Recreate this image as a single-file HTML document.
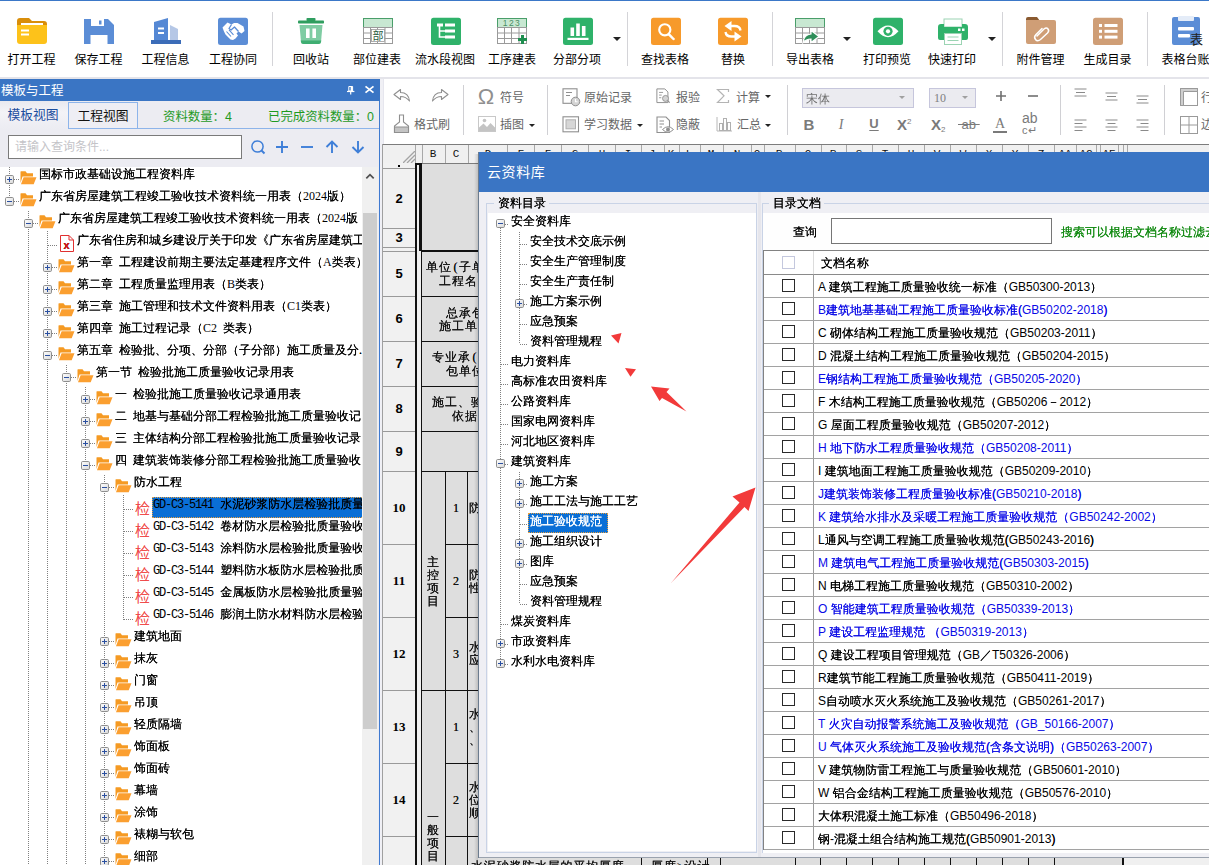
<!DOCTYPE html>
<html lang="zh-CN"><head><meta charset="utf-8"><title>云资料库</title>
<style>
*{box-sizing:border-box;margin:0;padding:0}
html,body{width:1209px;height:865px;overflow:hidden;background:#f0f0f5}
body{position:relative;font-family:"Liberation Sans","Noto Sans CJK SC",sans-serif;font-size:12px;color:#000}
.abs{position:absolute}
.yh{font-family:"Liberation Sans","Noto Sans CJK SC",sans-serif}
.st{font-family:"Liberation Serif","WenQuanYi Zen Hei",sans-serif}
#topline{left:0;top:0;width:1209px;height:1px;background:#3b78c8}
#tb1{left:0;top:1px;width:1209px;height:76px;background:#fff}
#tb1line{left:0;top:77px;width:1209px;height:2px;background:#e4e4ea}
.tbi{position:absolute;top:53px;height:14px;line-height:14px;font-size:12px;white-space:nowrap;text-align:center;color:#000;transform:translateX(-50%)}
.tbic{position:absolute}
.vsep{position:absolute;width:1px;background:#d4d4d8}
.darr{position:absolute;width:0;height:0;border-left:3px solid transparent;border-right:3px solid transparent;border-top:3px solid #222}
/* left panel */
#lp{left:0;top:79px;width:380px;height:786px;background:#ececf2}
#lptitle{left:0;top:0;width:380px;height:22px;background:#3a75c4;color:#fff;font-size:12.5px;line-height:25px;padding-left:1px}
#lpborder{left:378.5px;top:22px;width:1.5px;height:764px;background:#3f7ad0}

.fo{display:block}
.tr{word-spacing:3px;white-space:nowrap;font-size:12px;line-height:22px;height:22px;color:#000}
.tr .code{font-family:"Liberation Mono",monospace;font-size:12px;letter-spacing:-1.2px;margin-right:1.2px}

.vdot{width:1px;background-image:linear-gradient(#808080 50%,transparent 50%);background-size:1px 2px}
.hdot{height:1px;background-image:linear-gradient(90deg,#808080 50%,transparent 50%);background-size:2px 1px}

.t2{font-size:12px;line-height:16px;height:16px;white-space:nowrap}
.colh{width:20px;text-align:center;font-size:11px;line-height:16px;font-family:"Liberation Mono",monospace;color:#111}
.cell{font-size:12px;line-height:18px;height:18px;letter-spacing:1px;white-space:nowrap;color:#111}

.dt{font-family:"Liberation Sans","WenQuanYi Zen Hei",sans-serif}
.dt .l{text-shadow:none}

.cell .p{display:inline-block;width:7px;letter-spacing:0;text-align:center}

.st,.dt,.tr,.cell{text-shadow:0 0 0}
.dt .l,.tr .code,.tr .l{text-shadow:none}
</style></head>
<body>
<div class="abs" id="tb1"></div><div class="abs" id="topline"></div><div class="abs" id="tb1line"></div>
<div class="tbic" style="left:15.5px;top:15px"><svg width="32" height="32" viewBox="0 0 32 32">
<path d="M1 6 Q1 3 4 3 L13 3 L16 6 L28 6 Q31 6 31 9 L31 12 L1 12 Z" fill="#d98e0a"/>
<rect x="5" y="8" width="22" height="6" fill="#fff"/>
<path d="M1 10 L31 10 L31 26 Q31 29 28 29 L4 29 Q1 29 1 26 Z" fill="#fdc21a"/>
<rect x="5" y="14.5" width="8" height="2" fill="#fff"/><rect x="5" y="18.5" width="8" height="2" fill="#fff"/>
</svg></div>
<div class="tbi" style="left:31.5px">打开工程</div>
<div class="tbic" style="left:82.5px;top:15px"><svg width="32" height="32" viewBox="0 0 32 32">
<path d="M1 4 L25 4 L31 10 L31 29 L1 29 Z" fill="#5b8dd6"/>
<rect x="8" y="4" width="13" height="7" fill="#fff"/><rect x="16" y="5.5" width="2.5" height="4" fill="#5b8dd6"/>
<rect x="7.5" y="20" width="17" height="9" fill="#fff"/>
</svg></div>
<div class="tbi" style="left:98.5px">保存工程</div>
<div class="tbic" style="left:149.5px;top:15px"><svg width="32" height="32" viewBox="0 0 32 32">
<path d="M4 7 L18 3 L18 25 L4 25 Z" fill="#5588d4"/>
<path d="M20 10 L28 14 L28 25 L20 25 Z" fill="#b5c7e6"/>
<rect x="1" y="25" width="30" height="4" fill="#3b6cb8"/>
<rect x="8" y="12.5" width="6" height="2" fill="#fff"/><rect x="8" y="17" width="6" height="2" fill="#fff"/>
</svg></div>
<div class="tbi" style="left:165.5px">工程信息</div>
<div class="tbic" style="left:217px;top:15px"><svg width="32" height="32" viewBox="0 0 32 32">
<rect x="1" y="2.7" width="30" height="27.3" rx="2.5" fill="#5b8dd6"/>
<path d="M5.5 12.5 L10.5 7.5 L14.5 9.5 L17 8 L20.5 8 L26.5 11.5 L27.5 16 L24.5 18.5 L21.5 16.5 L19.5 18.5 L21 20.5 L18.5 23.5 L16 25 L13.5 24.5 L8.5 19.5 L7 16.5 Z" fill="#fff"/>
<path d="M14.5 9.5 L12 13.5 L14 15 L17.5 12 L21.5 16.5" stroke="#5b8dd6" stroke-width="1.3" fill="none" stroke-linejoin="round"/>
<path d="M9.5 16.5 L14 21.5 M12 14.8 L16.5 19.8" stroke="#5b8dd6" stroke-width="1.1" fill="none"/>
</svg></div>
<div class="tbi" style="left:233px">工程协同</div>
<div class="tbic" style="left:295px;top:15px"><svg width="32" height="32" viewBox="0 0 32 32">
<rect x="11.5" y="3" width="9" height="3" rx="0.8" fill="#2f9e5f"/>
<rect x="3" y="5.5" width="26" height="3" rx="0.8" fill="#2f9e5f"/>
<path d="M4.5 10 L27.5 10 L26 27 Q25.8 29 23.5 29 L8.5 29 Q6.2 29 6 27 Z" fill="#7fcca3"/>
<path d="M5.7 25.5 L26.3 25.5 L26 27 Q25.8 29 23.5 29 L8.5 29 Q6.2 29 6 27 Z" fill="#3fae72"/>
<rect x="11" y="13.5" width="3.6" height="9.5" fill="#fff"/><rect x="17.4" y="13.5" width="3.6" height="9.5" fill="#fff"/>
</svg></div>
<div class="tbi" style="left:311px">回收站</div>
<div class="tbic" style="left:362.3px;top:15px"><svg width="32" height="32" viewBox="0 0 32 32">
<rect x="1.5" y="3.5" width="29" height="9" fill="#c8e8d2" stroke="#4a9e6a" stroke-width="1"/>
<rect x="1.5" y="12.5" width="29" height="16" fill="#fff" stroke="#9a9a9a" stroke-width="1"/>
<path d="M1.5 18 H30.5 M1.5 23.5 H30.5 M8.5 12.5 V28.5 M15.5 12.5 V28.5 M23 12.5 V28.5" stroke="#9a9a9a" stroke-width="1" fill="none"/>
<rect x="9.5" y="14.5" width="13" height="12" fill="#fff" stroke="#9a9a9a" stroke-width="0.8"/><text x="16" y="25" font-size="11" text-anchor="middle" fill="#2a5a3c" font-family="Liberation Sans,Noto Sans CJK SC,sans-serif">部</text></svg></div>
<div class="tbi" style="left:377px">部位建表</div>
<div class="tbic" style="left:430px;top:15px"><svg width="32" height="32" viewBox="0 0 32 32">
<rect x="1" y="2.7" width="30" height="27.3" rx="2.5" fill="#2fb26a"/>
<rect x="7" y="8.5" width="6" height="3" fill="#fff"/>
<rect x="15" y="8.5" width="10" height="3" fill="#fff"/><rect x="15" y="14.5" width="10" height="3" fill="#fff"/><rect x="15" y="20.5" width="10" height="3" fill="#fff"/>
<path d="M9.5 11 V22 H15 M9.5 16 H15" stroke="#fff" stroke-width="1.6" fill="none"/>
</svg></div>
<div class="tbi" style="left:445px">流水段视图</div>
<div class="tbic" style="left:496px;top:15px"><svg width="32" height="32" viewBox="0 0 32 32">
<rect x="1.5" y="3.5" width="29" height="9" fill="#c8e8d2" stroke="#4a9e6a" stroke-width="1"/>
<rect x="1.5" y="12.5" width="29" height="16" fill="#fff" stroke="#9a9a9a" stroke-width="1"/>
<path d="M1.5 18 H30.5 M1.5 23.5 H30.5 M8.5 12.5 V28.5 M15.5 12.5 V28.5 M23 12.5 V28.5" stroke="#9a9a9a" stroke-width="1" fill="none"/>
<text x="16" y="11" font-size="8.5" text-anchor="middle" fill="#4a8e64" letter-spacing="1.5" font-family="Liberation Sans,sans-serif">123</text><path d="M22 24.5 H31 M26.5 20 V29" stroke="#1f8e4f" stroke-width="3" fill="none"/></svg></div>
<div class="tbi" style="left:512px">工序建表</div>
<div class="tbic" style="left:562.3px;top:15px"><svg width="32" height="32" viewBox="0 0 32 32">
<rect x="1" y="2.7" width="30" height="27.3" rx="2.5" fill="#2fb26a"/>
<rect x="8.5" y="12.5" width="3.6" height="8.5" fill="#fff"/><rect x="14.2" y="8.5" width="3.6" height="12.5" fill="#fff"/><rect x="19.9" y="11" width="3.6" height="10" fill="#fff"/>
<rect x="5.5" y="22.8" width="21" height="2.2" fill="#fff"/>
</svg></div>
<div class="tbi" style="left:577px">分部分项</div>
<div class="tbic" style="left:649.8px;top:15px"><svg width="32" height="32" viewBox="0 0 32 32">
<rect x="1" y="2.7" width="30" height="27.3" rx="2.5" fill="#f79a2b"/>
<circle cx="14.8" cy="14.8" r="5.6" stroke="#fff" stroke-width="2.1" fill="none"/><path d="M19 19.3 L23.5 24" stroke="#fff" stroke-width="2.5" stroke-linecap="round"/>
</svg></div>
<div class="tbi" style="left:665px">查找表格</div>
<div class="tbic" style="left:717px;top:15px"><svg width="32" height="32" viewBox="0 0 32 32">
<rect x="1" y="2.7" width="30" height="27.3" rx="2.5" fill="#f79a2b"/>
<path d="M23.5 15.5 Q23 11 17.5 11 H13" stroke="#fff" stroke-width="2.3" fill="none"/>
<path d="M7.5 11 L14.5 6 V16 Z" fill="#fff"/>
<path d="M8.5 17 Q9 21.5 14.5 21.5 H19" stroke="#fff" stroke-width="2.3" fill="none"/>
<path d="M24.5 21.5 L17.5 16.5 V26.5 Z" fill="#fff"/>
</svg></div>
<div class="tbi" style="left:733px">替换</div>
<div class="tbic" style="left:794px;top:15px"><svg width="32" height="32" viewBox="0 0 32 32">
<rect x="1.5" y="3.5" width="29" height="9" fill="#c8e8d2" stroke="#4a9e6a" stroke-width="1"/>
<rect x="1.5" y="12.5" width="29" height="16" fill="#fff" stroke="#9a9a9a" stroke-width="1"/>
<path d="M1.5 18 H30.5 M1.5 23.5 H30.5 M8.5 12.5 V28.5 M15.5 12.5 V28.5 M23 12.5 V28.5" stroke="#9a9a9a" stroke-width="1" fill="none"/>
<path d="M9 27.5 Q10 19.5 17 19 V15.5 L25 21.5 L17 27.5 V24 Q12 24 9 27.5 Z" fill="#2f8e5a" stroke="#fff" stroke-width="1.2"/></svg></div>
<div class="tbi" style="left:810px">导出表格</div>
<div class="tbic" style="left:871.5px;top:15px"><svg width="32" height="32" viewBox="0 0 32 32">
<rect x="1" y="2.7" width="30" height="27.3" rx="2.5" fill="#2fb26a"/>
<path d="M5.5 16.3 Q16 4.5 26.5 16.3 Q16 28 5.5 16.3 Z" fill="#fff"/><circle cx="16" cy="16.3" r="4.6" fill="#2fb26a"/><circle cx="16" cy="16.3" r="2.1" fill="#fff"/>
</svg></div>
<div class="tbi" style="left:887px">打印预览</div>
<div class="tbic" style="left:937px;top:15px"><svg width="32" height="32" viewBox="0 0 32 32">
<rect x="7" y="4" width="18" height="8" fill="#fff" stroke="#9bd4b3" stroke-width="1"/>
<path d="M4 9 H7 V12 H25 V9 H28 Q31 9 31 12 V23 Q31 25 29 25 H3 Q1 25 1 23 V12 Q1 9 4 9 Z" fill="#2fb26a"/>
<rect x="21" y="13.5" width="2.5" height="2.5" fill="#fff"/><rect x="25" y="13.5" width="2.5" height="2.5" fill="#fff"/>
<rect x="7.5" y="18.5" width="17" height="11" fill="#fff" stroke="#9bd4b3" stroke-width="1"/>
<path d="M10.5 22 H21.5 M10.5 25.5 H21.5" stroke="#9bd4b3" stroke-width="1"/>
</svg></div>
<div class="tbi" style="left:952px">快速打印</div>
<div class="tbic" style="left:1024.5px;top:15px"><svg width="32" height="32" viewBox="0 0 32 32">
<path d="M1 4 Q1 2 3 2 L12 2 L15 6 L1 6 Z" fill="#8a5a30"/>
<path d="M1 5 H29 Q31 5 31 7 V27 Q31 29 29 29 H3 Q1 29 1 27 Z" fill="#cf9e76"/>
<path d="M12 21 L19 14 Q21.5 12 23 14 Q24.5 16 22.5 18 L15.5 24.5 Q12.5 27 10.5 24.5 Q8.5 22 11 19.5 L17 13.5" stroke="#fff" stroke-width="1.5" fill="none" stroke-linecap="round"/>
</svg></div>
<div class="tbi" style="left:1040.5px">附件管理</div>
<div class="tbic" style="left:1091.5px;top:15px"><svg width="32" height="32" viewBox="0 0 32 32">
<rect x="1" y="2.7" width="30" height="27.3" rx="2.5" fill="#cf9e76"/>
<rect x="7" y="9" width="3" height="3" fill="#fff"/><rect x="12.5" y="9" width="13" height="3" fill="#fff"/>
<rect x="7" y="14.8" width="3" height="3" fill="#fff"/><rect x="12.5" y="14.8" width="13" height="3" fill="#fff"/>
<rect x="7" y="20.6" width="3" height="3" fill="#fff"/><rect x="12.5" y="20.6" width="13" height="3" fill="#fff"/>
</svg></div>
<div class="tbi" style="left:1107.5px">生成目录</div>
<div class="tbic" style="left:1169.5px;top:15px"><svg width="36" height="32" viewBox="0 0 36 32">
<path d="M2 4 Q2 2 4 2 H28 Q30 2 30 4 V28 Q30 30 28 30 H4 Q2 30 2 28 Z" fill="#5b8dd6"/>
<rect x="8" y="1" width="16" height="5" rx="1" fill="#e4ecf8"/>
<rect x="8" y="12" width="16" height="3.5" rx="1" fill="#fff"/><rect x="8" y="19" width="12" height="3.5" rx="1" fill="#fff"/>
<text x="26.5" y="29" font-size="13" text-anchor="middle" fill="#222" font-family="Liberation Sans,Noto Sans CJK SC,sans-serif">表</text>
</svg></div>
<div class="tbi" style="left:1185.5px">表格台账</div>
<div class="vsep" style="left:272px;top:12px;height:54px"></div>
<div class="vsep" style="left:627px;top:12px;height:54px"></div>
<div class="vsep" style="left:772px;top:12px;height:54px"></div>
<div class="vsep" style="left:1002px;top:12px;height:54px"></div>
<div class="vsep" style="left:1147px;top:12px;height:54px"></div>
<div class="darr" style="left:612.5px;top:37px;border-left-width:4px;border-right-width:4px;border-top-width:4px"></div>
<div class="darr" style="left:843px;top:37px;border-left-width:4px;border-right-width:4px;border-top-width:4px"></div>
<div class="darr" style="left:987.5px;top:37px;border-left-width:4px;border-right-width:4px;border-top-width:4px"></div>
<div class="abs" id="lp">
<div class="abs" id="lptitle">模板与工程</div>
<svg class="abs" style="left:345px;top:6px" width="12" height="12" viewBox="0 0 12 12"><path d="M3.8 1.5 H7.6 V6 H3.8 Z" stroke="#fff" stroke-width="1" fill="none"/><path d="M6.6 1.5 V6" stroke="#fff" stroke-width="1.9"/><path d="M2 6.5 H9.4" stroke="#fff" stroke-width="1.2"/><path d="M5.7 6.5 V9.6" stroke="#fff" stroke-width="1.2"/></svg>
<svg class="abs" style="left:364px;top:5px" width="12" height="12" viewBox="0 0 12 12"><path d="M1.5 2.3 L9.5 8.7 M9.5 2.3 L1.5 8.7" stroke="#fff" stroke-width="1.7"/></svg>
<div class="abs" style="left:0;top:22px;width:379px;height:28px;border-bottom:1px solid #8db4ea"></div>
<div class="abs" style="left:0;top:22px;width:69px;height:28px;background:linear-gradient(#e9e9ef,#f3f3f7 40%,#ececf2);color:#1c4e9e;line-height:28px;text-align:center;font-size:12.8px;padding-right:3px">模板视图</div>
<div class="abs" style="left:68px;top:23px;width:70px;height:27px;border:1px solid #8db4ea;background:#eeeef4;color:#111;line-height:25px;text-align:center;font-size:12.8px">工程视图</div>
<div class="abs" style="left:163px;top:22px;height:28px;line-height:33px;color:#1f9a1f;font-size:12.4px;white-space:nowrap">资料数量：4</div>
<div class="abs" style="left:268px;top:22px;height:28px;line-height:33px;color:#1f9a1f;font-size:12.4px;white-space:nowrap">已完成资料数量：0</div>
<div class="abs" style="left:8px;top:56px;width:234px;height:24px;border:1px solid #7a7a7a;background:#fff;color:#c4c4c8;font-size:12px;line-height:23px;padding-left:6px">请输入查询条件...</div>
<svg class="abs" style="left:250px;top:60px" width="120" height="16" viewBox="0 0 120 16"><circle cx="7.5" cy="7.5" r="5.6" stroke="#3f7fd8" stroke-width="1.5" fill="none"/><path d="M11.5 11.5 L14.5 14.5" stroke="#3f7fd8" stroke-width="1.9"/><path d="M26 8 H38 M32 2 V14" stroke="#3f7fd8" stroke-width="1.9"/><path d="M51 8 H63" stroke="#3f7fd8" stroke-width="1.9"/><path d="M82 14 V2.5 M76.5 8 L82 2.5 L87.5 8" stroke="#3f7fd8" stroke-width="1.9" fill="none"/><path d="M108 2 V13.5 M102.5 8 L108 13.5 L113.5 8" stroke="#3f7fd8" stroke-width="1.9" fill="none"/></svg>
<div class="abs st" id="tree" style="left:0;top:88px;width:362px;height:698px;background:#fff;overflow:hidden">
<div class="abs vdot" style="left:9px;top:0px;height:34px"></div>
<div class="abs vdot" style="left:28px;top:44px;height:666px"></div>
<div class="abs vdot" style="left:47px;top:64px;height:646px"></div>
<div class="abs vdot" style="left:66px;top:198px;height:512px"></div>
<div class="abs vdot" style="left:85px;top:220px;height:490px"></div>
<div class="abs vdot" style="left:104px;top:308px;height:402px"></div>
<div class="abs vdot" style="left:123px;top:328px;height:125px"></div>
<div class="abs hdot" style="left:10px;top:12px;width:10px"></div>
<svg class="abs" style="left:5px;top:8px" width="9" height="9" viewBox="0 0 9 9"><defs><linearGradient id="pg" x1="0" y1="0" x2="1" y2="1"><stop offset="0" stop-color="#fff"/><stop offset="1" stop-color="#d8d8d8"/></linearGradient></defs><rect x="0.5" y="0.5" width="8" height="8" rx="1.2" fill="url(#pg)" stroke="#8e8e8e"/><path d="M2 4.5 H7" stroke="#2a4fa0" stroke-width="1"/><path d="M4.5 2 V7" stroke="#2a4fa0" stroke-width="1"/></svg>
<div class="abs" style="left:20px;top:4px"><svg class="fo" width="17" height="14" viewBox="0 0 17 14"><path d="M0.5 0.8 Q0.5 0.3 1 0.3 H5.5 L7 2.2 H13 V5.5 H2.5 L0.5 12 Z" fill="#f59a23"/><path d="M1 13.3 L3.6 6.3 H16.5 L13.7 13.3 Z" fill="#fb9f30"/></svg></div>
<div class="abs tr" style="left:39px;top:-4px">国标市政基础设施工程资料库</div>
<div class="abs hdot" style="left:10px;top:34px;width:10px"></div>
<svg class="abs" style="left:5px;top:30px" width="9" height="9" viewBox="0 0 9 9"><defs><linearGradient id="pg" x1="0" y1="0" x2="1" y2="1"><stop offset="0" stop-color="#fff"/><stop offset="1" stop-color="#d8d8d8"/></linearGradient></defs><rect x="0.5" y="0.5" width="8" height="8" rx="1.2" fill="url(#pg)" stroke="#8e8e8e"/><path d="M2 4.5 H7" stroke="#2a4fa0" stroke-width="1"/></svg>
<div class="abs" style="left:20px;top:26px"><svg class="fo" width="17" height="14" viewBox="0 0 17 14"><path d="M0.5 0.8 Q0.5 0.3 1 0.3 H5.5 L7 2.2 H13 V5.5 H2.5 L0.5 12 Z" fill="#f59a23"/><path d="M1 13.3 L3.6 6.3 H16.5 L13.7 13.3 Z" fill="#fb9f30"/></svg></div>
<div class="abs tr" style="left:39px;top:18px">广东省房屋建筑工程竣工验收技术资料统一用表（<span class="l">2024</span>版）</div>
<div class="abs hdot" style="left:29px;top:56px;width:10px"></div>
<svg class="abs" style="left:24px;top:52px" width="9" height="9" viewBox="0 0 9 9"><defs><linearGradient id="pg" x1="0" y1="0" x2="1" y2="1"><stop offset="0" stop-color="#fff"/><stop offset="1" stop-color="#d8d8d8"/></linearGradient></defs><rect x="0.5" y="0.5" width="8" height="8" rx="1.2" fill="url(#pg)" stroke="#8e8e8e"/><path d="M2 4.5 H7" stroke="#2a4fa0" stroke-width="1"/></svg>
<div class="abs" style="left:39px;top:48px"><svg class="fo" width="17" height="14" viewBox="0 0 17 14"><path d="M0.5 0.8 Q0.5 0.3 1 0.3 H5.5 L7 2.2 H13 V5.5 H2.5 L0.5 12 Z" fill="#f59a23"/><path d="M1 13.3 L3.6 6.3 H16.5 L13.7 13.3 Z" fill="#fb9f30"/></svg></div>
<div class="abs tr" style="left:58px;top:40px">广东省房屋建筑工程竣工验收技术资料统一用表（<span class="l">2024</span>版</div>
<div class="abs hdot" style="left:48px;top:78px;width:10px"></div>
<div class="abs" style="left:59px;top:68px"><svg class="fo" width="16" height="17" viewBox="0 0 16 17"><path d="M1.5 0.5 H10 L14.5 5 V16.5 H1.5 Z" fill="#fff" stroke="#e03030" stroke-width="1"/><path d="M10 0.5 V5 H14.5" fill="none" stroke="#e03030" stroke-width="1"/><text x="7.5" y="14" font-size="11" font-weight="bold" fill="#e01010" text-anchor="middle" font-family="Liberation Sans,sans-serif">x</text></svg></div>
<div class="abs tr" style="left:77px;top:62px">广东省住房和城乡建设厅关于印发《广东省房屋建筑工</div>
<div class="abs hdot" style="left:48px;top:100px;width:10px"></div>
<svg class="abs" style="left:43px;top:96px" width="9" height="9" viewBox="0 0 9 9"><defs><linearGradient id="pg" x1="0" y1="0" x2="1" y2="1"><stop offset="0" stop-color="#fff"/><stop offset="1" stop-color="#d8d8d8"/></linearGradient></defs><rect x="0.5" y="0.5" width="8" height="8" rx="1.2" fill="url(#pg)" stroke="#8e8e8e"/><path d="M2 4.5 H7" stroke="#2a4fa0" stroke-width="1"/><path d="M4.5 2 V7" stroke="#2a4fa0" stroke-width="1"/></svg>
<div class="abs" style="left:58px;top:92px"><svg class="fo" width="17" height="14" viewBox="0 0 17 14"><path d="M0.5 0.8 Q0.5 0.3 1 0.3 H5.5 L7 2.2 H13 V5.5 H2.5 L0.5 12 Z" fill="#f59a23"/><path d="M1 13.3 L3.6 6.3 H16.5 L13.7 13.3 Z" fill="#fb9f30"/></svg></div>
<div class="abs tr" style="left:77px;top:84px">第一章 工程建设前期主要法定基建程序文件（<span class="l">A</span>类表）</div>
<div class="abs hdot" style="left:48px;top:122px;width:10px"></div>
<svg class="abs" style="left:43px;top:118px" width="9" height="9" viewBox="0 0 9 9"><defs><linearGradient id="pg" x1="0" y1="0" x2="1" y2="1"><stop offset="0" stop-color="#fff"/><stop offset="1" stop-color="#d8d8d8"/></linearGradient></defs><rect x="0.5" y="0.5" width="8" height="8" rx="1.2" fill="url(#pg)" stroke="#8e8e8e"/><path d="M2 4.5 H7" stroke="#2a4fa0" stroke-width="1"/><path d="M4.5 2 V7" stroke="#2a4fa0" stroke-width="1"/></svg>
<div class="abs" style="left:58px;top:114px"><svg class="fo" width="17" height="14" viewBox="0 0 17 14"><path d="M0.5 0.8 Q0.5 0.3 1 0.3 H5.5 L7 2.2 H13 V5.5 H2.5 L0.5 12 Z" fill="#f59a23"/><path d="M1 13.3 L3.6 6.3 H16.5 L13.7 13.3 Z" fill="#fb9f30"/></svg></div>
<div class="abs tr" style="left:77px;top:106px">第二章 工程质量监理用表（<span class="l">B</span>类表）</div>
<div class="abs hdot" style="left:48px;top:144px;width:10px"></div>
<svg class="abs" style="left:43px;top:140px" width="9" height="9" viewBox="0 0 9 9"><defs><linearGradient id="pg" x1="0" y1="0" x2="1" y2="1"><stop offset="0" stop-color="#fff"/><stop offset="1" stop-color="#d8d8d8"/></linearGradient></defs><rect x="0.5" y="0.5" width="8" height="8" rx="1.2" fill="url(#pg)" stroke="#8e8e8e"/><path d="M2 4.5 H7" stroke="#2a4fa0" stroke-width="1"/><path d="M4.5 2 V7" stroke="#2a4fa0" stroke-width="1"/></svg>
<div class="abs" style="left:58px;top:136px"><svg class="fo" width="17" height="14" viewBox="0 0 17 14"><path d="M0.5 0.8 Q0.5 0.3 1 0.3 H5.5 L7 2.2 H13 V5.5 H2.5 L0.5 12 Z" fill="#f59a23"/><path d="M1 13.3 L3.6 6.3 H16.5 L13.7 13.3 Z" fill="#fb9f30"/></svg></div>
<div class="abs tr" style="left:77px;top:128px">第三章 施工管理和技术文件资料用表（<span class="l">C1</span>类表）</div>
<div class="abs hdot" style="left:48px;top:166px;width:10px"></div>
<svg class="abs" style="left:43px;top:162px" width="9" height="9" viewBox="0 0 9 9"><defs><linearGradient id="pg" x1="0" y1="0" x2="1" y2="1"><stop offset="0" stop-color="#fff"/><stop offset="1" stop-color="#d8d8d8"/></linearGradient></defs><rect x="0.5" y="0.5" width="8" height="8" rx="1.2" fill="url(#pg)" stroke="#8e8e8e"/><path d="M2 4.5 H7" stroke="#2a4fa0" stroke-width="1"/><path d="M4.5 2 V7" stroke="#2a4fa0" stroke-width="1"/></svg>
<div class="abs" style="left:58px;top:158px"><svg class="fo" width="17" height="14" viewBox="0 0 17 14"><path d="M0.5 0.8 Q0.5 0.3 1 0.3 H5.5 L7 2.2 H13 V5.5 H2.5 L0.5 12 Z" fill="#f59a23"/><path d="M1 13.3 L3.6 6.3 H16.5 L13.7 13.3 Z" fill="#fb9f30"/></svg></div>
<div class="abs tr" style="left:77px;top:150px">第四章 施工过程记录（<span class="l">C2</span> 类表）</div>
<div class="abs hdot" style="left:48px;top:188px;width:10px"></div>
<svg class="abs" style="left:43px;top:184px" width="9" height="9" viewBox="0 0 9 9"><defs><linearGradient id="pg" x1="0" y1="0" x2="1" y2="1"><stop offset="0" stop-color="#fff"/><stop offset="1" stop-color="#d8d8d8"/></linearGradient></defs><rect x="0.5" y="0.5" width="8" height="8" rx="1.2" fill="url(#pg)" stroke="#8e8e8e"/><path d="M2 4.5 H7" stroke="#2a4fa0" stroke-width="1"/></svg>
<div class="abs" style="left:58px;top:180px"><svg class="fo" width="17" height="14" viewBox="0 0 17 14"><path d="M0.5 0.8 Q0.5 0.3 1 0.3 H5.5 L7 2.2 H13 V5.5 H2.5 L0.5 12 Z" fill="#f59a23"/><path d="M1 13.3 L3.6 6.3 H16.5 L13.7 13.3 Z" fill="#fb9f30"/></svg></div>
<div class="abs tr" style="left:77px;top:172px">第五章 检验批、分项、分部（子分部）施工质量及分.</div>
<div class="abs hdot" style="left:67px;top:210px;width:10px"></div>
<svg class="abs" style="left:62px;top:206px" width="9" height="9" viewBox="0 0 9 9"><defs><linearGradient id="pg" x1="0" y1="0" x2="1" y2="1"><stop offset="0" stop-color="#fff"/><stop offset="1" stop-color="#d8d8d8"/></linearGradient></defs><rect x="0.5" y="0.5" width="8" height="8" rx="1.2" fill="url(#pg)" stroke="#8e8e8e"/><path d="M2 4.5 H7" stroke="#2a4fa0" stroke-width="1"/></svg>
<div class="abs" style="left:77px;top:202px"><svg class="fo" width="17" height="14" viewBox="0 0 17 14"><path d="M0.5 0.8 Q0.5 0.3 1 0.3 H5.5 L7 2.2 H13 V5.5 H2.5 L0.5 12 Z" fill="#f59a23"/><path d="M1 13.3 L3.6 6.3 H16.5 L13.7 13.3 Z" fill="#fb9f30"/></svg></div>
<div class="abs tr" style="left:96px;top:194px">第一节 检验批施工质量验收记录用表</div>
<div class="abs hdot" style="left:86px;top:232px;width:10px"></div>
<svg class="abs" style="left:81px;top:228px" width="9" height="9" viewBox="0 0 9 9"><defs><linearGradient id="pg" x1="0" y1="0" x2="1" y2="1"><stop offset="0" stop-color="#fff"/><stop offset="1" stop-color="#d8d8d8"/></linearGradient></defs><rect x="0.5" y="0.5" width="8" height="8" rx="1.2" fill="url(#pg)" stroke="#8e8e8e"/><path d="M2 4.5 H7" stroke="#2a4fa0" stroke-width="1"/><path d="M4.5 2 V7" stroke="#2a4fa0" stroke-width="1"/></svg>
<div class="abs" style="left:96px;top:224px"><svg class="fo" width="17" height="14" viewBox="0 0 17 14"><path d="M0.5 0.8 Q0.5 0.3 1 0.3 H5.5 L7 2.2 H13 V5.5 H2.5 L0.5 12 Z" fill="#f59a23"/><path d="M1 13.3 L3.6 6.3 H16.5 L13.7 13.3 Z" fill="#fb9f30"/></svg></div>
<div class="abs tr" style="left:115px;top:216px">一 检验批施工质量验收记录通用表</div>
<div class="abs hdot" style="left:86px;top:254px;width:10px"></div>
<svg class="abs" style="left:81px;top:250px" width="9" height="9" viewBox="0 0 9 9"><defs><linearGradient id="pg" x1="0" y1="0" x2="1" y2="1"><stop offset="0" stop-color="#fff"/><stop offset="1" stop-color="#d8d8d8"/></linearGradient></defs><rect x="0.5" y="0.5" width="8" height="8" rx="1.2" fill="url(#pg)" stroke="#8e8e8e"/><path d="M2 4.5 H7" stroke="#2a4fa0" stroke-width="1"/><path d="M4.5 2 V7" stroke="#2a4fa0" stroke-width="1"/></svg>
<div class="abs" style="left:96px;top:246px"><svg class="fo" width="17" height="14" viewBox="0 0 17 14"><path d="M0.5 0.8 Q0.5 0.3 1 0.3 H5.5 L7 2.2 H13 V5.5 H2.5 L0.5 12 Z" fill="#f59a23"/><path d="M1 13.3 L3.6 6.3 H16.5 L13.7 13.3 Z" fill="#fb9f30"/></svg></div>
<div class="abs tr" style="left:115px;top:238px">二 地基与基础分部工程检验批施工质量验收记</div>
<div class="abs hdot" style="left:86px;top:276px;width:10px"></div>
<svg class="abs" style="left:81px;top:272px" width="9" height="9" viewBox="0 0 9 9"><defs><linearGradient id="pg" x1="0" y1="0" x2="1" y2="1"><stop offset="0" stop-color="#fff"/><stop offset="1" stop-color="#d8d8d8"/></linearGradient></defs><rect x="0.5" y="0.5" width="8" height="8" rx="1.2" fill="url(#pg)" stroke="#8e8e8e"/><path d="M2 4.5 H7" stroke="#2a4fa0" stroke-width="1"/><path d="M4.5 2 V7" stroke="#2a4fa0" stroke-width="1"/></svg>
<div class="abs" style="left:96px;top:268px"><svg class="fo" width="17" height="14" viewBox="0 0 17 14"><path d="M0.5 0.8 Q0.5 0.3 1 0.3 H5.5 L7 2.2 H13 V5.5 H2.5 L0.5 12 Z" fill="#f59a23"/><path d="M1 13.3 L3.6 6.3 H16.5 L13.7 13.3 Z" fill="#fb9f30"/></svg></div>
<div class="abs tr" style="left:115px;top:260px">三 主体结构分部工程检验批施工质量验收记录</div>
<div class="abs hdot" style="left:86px;top:298px;width:10px"></div>
<svg class="abs" style="left:81px;top:294px" width="9" height="9" viewBox="0 0 9 9"><defs><linearGradient id="pg" x1="0" y1="0" x2="1" y2="1"><stop offset="0" stop-color="#fff"/><stop offset="1" stop-color="#d8d8d8"/></linearGradient></defs><rect x="0.5" y="0.5" width="8" height="8" rx="1.2" fill="url(#pg)" stroke="#8e8e8e"/><path d="M2 4.5 H7" stroke="#2a4fa0" stroke-width="1"/></svg>
<div class="abs" style="left:96px;top:290px"><svg class="fo" width="17" height="14" viewBox="0 0 17 14"><path d="M0.5 0.8 Q0.5 0.3 1 0.3 H5.5 L7 2.2 H13 V5.5 H2.5 L0.5 12 Z" fill="#f59a23"/><path d="M1 13.3 L3.6 6.3 H16.5 L13.7 13.3 Z" fill="#fb9f30"/></svg></div>
<div class="abs tr" style="left:115px;top:282px">四 建筑装饰装修分部工程检验批施工质量验收</div>
<div class="abs hdot" style="left:105px;top:320px;width:10px"></div>
<svg class="abs" style="left:100px;top:316px" width="9" height="9" viewBox="0 0 9 9"><defs><linearGradient id="pg" x1="0" y1="0" x2="1" y2="1"><stop offset="0" stop-color="#fff"/><stop offset="1" stop-color="#d8d8d8"/></linearGradient></defs><rect x="0.5" y="0.5" width="8" height="8" rx="1.2" fill="url(#pg)" stroke="#8e8e8e"/><path d="M2 4.5 H7" stroke="#2a4fa0" stroke-width="1"/></svg>
<div class="abs" style="left:115px;top:312px"><svg class="fo" width="17" height="14" viewBox="0 0 17 14"><path d="M0.5 0.8 Q0.5 0.3 1 0.3 H5.5 L7 2.2 H13 V5.5 H2.5 L0.5 12 Z" fill="#f59a23"/><path d="M1 13.3 L3.6 6.3 H16.5 L13.7 13.3 Z" fill="#fb9f30"/></svg></div>
<div class="abs tr" style="left:134px;top:304px">防水工程</div>
<div class="abs hdot" style="left:124px;top:342px;width:10px"></div>
<div class="abs yh" style="left:135px;top:333px;font-size:15px;line-height:17px;color:#f04848;font-weight:300">检</div>
<div class="abs" style="left:152px;top:330px;width:300px;height:21px;background:#0a6fd6;border:1px dotted #e8a040"></div>
<div class="abs tr" style="left:153px;top:326px"><span class="code">GD-C3-5141</span> 水泥砂浆防水层检验批质量</div>
<div class="abs hdot" style="left:124px;top:364px;width:10px"></div>
<div class="abs yh" style="left:135px;top:355px;font-size:15px;line-height:17px;color:#f04848;font-weight:300">检</div>
<div class="abs tr" style="left:153px;top:348px"><span class="code">GD-C3-5142</span> 卷材防水层检验批质量验收</div>
<div class="abs hdot" style="left:124px;top:386px;width:10px"></div>
<div class="abs yh" style="left:135px;top:377px;font-size:15px;line-height:17px;color:#f04848;font-weight:300">检</div>
<div class="abs tr" style="left:153px;top:370px"><span class="code">GD-C3-5143</span> 涂料防水层检验批质量验收</div>
<div class="abs hdot" style="left:124px;top:408px;width:10px"></div>
<div class="abs yh" style="left:135px;top:399px;font-size:15px;line-height:17px;color:#f04848;font-weight:300">检</div>
<div class="abs tr" style="left:153px;top:392px"><span class="code">GD-C3-5144</span> 塑料防水板防水层检验批质</div>
<div class="abs hdot" style="left:124px;top:430px;width:10px"></div>
<div class="abs yh" style="left:135px;top:421px;font-size:15px;line-height:17px;color:#f04848;font-weight:300">检</div>
<div class="abs tr" style="left:153px;top:414px"><span class="code">GD-C3-5145</span> 金属板防水层检验批质量验</div>
<div class="abs hdot" style="left:124px;top:452px;width:10px"></div>
<div class="abs yh" style="left:135px;top:443px;font-size:15px;line-height:17px;color:#f04848;font-weight:300">检</div>
<div class="abs tr" style="left:153px;top:436px"><span class="code">GD-C3-5146</span> 膨润土防水材料防水层检验</div>
<div class="abs hdot" style="left:105px;top:474px;width:10px"></div>
<svg class="abs" style="left:100px;top:470px" width="9" height="9" viewBox="0 0 9 9"><defs><linearGradient id="pg" x1="0" y1="0" x2="1" y2="1"><stop offset="0" stop-color="#fff"/><stop offset="1" stop-color="#d8d8d8"/></linearGradient></defs><rect x="0.5" y="0.5" width="8" height="8" rx="1.2" fill="url(#pg)" stroke="#8e8e8e"/><path d="M2 4.5 H7" stroke="#2a4fa0" stroke-width="1"/><path d="M4.5 2 V7" stroke="#2a4fa0" stroke-width="1"/></svg>
<div class="abs" style="left:115px;top:466px"><svg class="fo" width="17" height="14" viewBox="0 0 17 14"><path d="M0.5 0.8 Q0.5 0.3 1 0.3 H5.5 L7 2.2 H13 V5.5 H2.5 L0.5 12 Z" fill="#f59a23"/><path d="M1 13.3 L3.6 6.3 H16.5 L13.7 13.3 Z" fill="#fb9f30"/></svg></div>
<div class="abs tr" style="left:134px;top:458px">建筑地面</div>
<div class="abs hdot" style="left:105px;top:496px;width:10px"></div>
<svg class="abs" style="left:100px;top:492px" width="9" height="9" viewBox="0 0 9 9"><defs><linearGradient id="pg" x1="0" y1="0" x2="1" y2="1"><stop offset="0" stop-color="#fff"/><stop offset="1" stop-color="#d8d8d8"/></linearGradient></defs><rect x="0.5" y="0.5" width="8" height="8" rx="1.2" fill="url(#pg)" stroke="#8e8e8e"/><path d="M2 4.5 H7" stroke="#2a4fa0" stroke-width="1"/><path d="M4.5 2 V7" stroke="#2a4fa0" stroke-width="1"/></svg>
<div class="abs" style="left:115px;top:488px"><svg class="fo" width="17" height="14" viewBox="0 0 17 14"><path d="M0.5 0.8 Q0.5 0.3 1 0.3 H5.5 L7 2.2 H13 V5.5 H2.5 L0.5 12 Z" fill="#f59a23"/><path d="M1 13.3 L3.6 6.3 H16.5 L13.7 13.3 Z" fill="#fb9f30"/></svg></div>
<div class="abs tr" style="left:134px;top:480px">抹灰</div>
<div class="abs hdot" style="left:105px;top:518px;width:10px"></div>
<svg class="abs" style="left:100px;top:514px" width="9" height="9" viewBox="0 0 9 9"><defs><linearGradient id="pg" x1="0" y1="0" x2="1" y2="1"><stop offset="0" stop-color="#fff"/><stop offset="1" stop-color="#d8d8d8"/></linearGradient></defs><rect x="0.5" y="0.5" width="8" height="8" rx="1.2" fill="url(#pg)" stroke="#8e8e8e"/><path d="M2 4.5 H7" stroke="#2a4fa0" stroke-width="1"/><path d="M4.5 2 V7" stroke="#2a4fa0" stroke-width="1"/></svg>
<div class="abs" style="left:115px;top:510px"><svg class="fo" width="17" height="14" viewBox="0 0 17 14"><path d="M0.5 0.8 Q0.5 0.3 1 0.3 H5.5 L7 2.2 H13 V5.5 H2.5 L0.5 12 Z" fill="#f59a23"/><path d="M1 13.3 L3.6 6.3 H16.5 L13.7 13.3 Z" fill="#fb9f30"/></svg></div>
<div class="abs tr" style="left:134px;top:502px">门窗</div>
<div class="abs hdot" style="left:105px;top:540px;width:10px"></div>
<svg class="abs" style="left:100px;top:536px" width="9" height="9" viewBox="0 0 9 9"><defs><linearGradient id="pg" x1="0" y1="0" x2="1" y2="1"><stop offset="0" stop-color="#fff"/><stop offset="1" stop-color="#d8d8d8"/></linearGradient></defs><rect x="0.5" y="0.5" width="8" height="8" rx="1.2" fill="url(#pg)" stroke="#8e8e8e"/><path d="M2 4.5 H7" stroke="#2a4fa0" stroke-width="1"/><path d="M4.5 2 V7" stroke="#2a4fa0" stroke-width="1"/></svg>
<div class="abs" style="left:115px;top:532px"><svg class="fo" width="17" height="14" viewBox="0 0 17 14"><path d="M0.5 0.8 Q0.5 0.3 1 0.3 H5.5 L7 2.2 H13 V5.5 H2.5 L0.5 12 Z" fill="#f59a23"/><path d="M1 13.3 L3.6 6.3 H16.5 L13.7 13.3 Z" fill="#fb9f30"/></svg></div>
<div class="abs tr" style="left:134px;top:524px">吊顶</div>
<div class="abs hdot" style="left:105px;top:562px;width:10px"></div>
<svg class="abs" style="left:100px;top:558px" width="9" height="9" viewBox="0 0 9 9"><defs><linearGradient id="pg" x1="0" y1="0" x2="1" y2="1"><stop offset="0" stop-color="#fff"/><stop offset="1" stop-color="#d8d8d8"/></linearGradient></defs><rect x="0.5" y="0.5" width="8" height="8" rx="1.2" fill="url(#pg)" stroke="#8e8e8e"/><path d="M2 4.5 H7" stroke="#2a4fa0" stroke-width="1"/><path d="M4.5 2 V7" stroke="#2a4fa0" stroke-width="1"/></svg>
<div class="abs" style="left:115px;top:554px"><svg class="fo" width="17" height="14" viewBox="0 0 17 14"><path d="M0.5 0.8 Q0.5 0.3 1 0.3 H5.5 L7 2.2 H13 V5.5 H2.5 L0.5 12 Z" fill="#f59a23"/><path d="M1 13.3 L3.6 6.3 H16.5 L13.7 13.3 Z" fill="#fb9f30"/></svg></div>
<div class="abs tr" style="left:134px;top:546px">轻质隔墙</div>
<div class="abs hdot" style="left:105px;top:584px;width:10px"></div>
<svg class="abs" style="left:100px;top:580px" width="9" height="9" viewBox="0 0 9 9"><defs><linearGradient id="pg" x1="0" y1="0" x2="1" y2="1"><stop offset="0" stop-color="#fff"/><stop offset="1" stop-color="#d8d8d8"/></linearGradient></defs><rect x="0.5" y="0.5" width="8" height="8" rx="1.2" fill="url(#pg)" stroke="#8e8e8e"/><path d="M2 4.5 H7" stroke="#2a4fa0" stroke-width="1"/><path d="M4.5 2 V7" stroke="#2a4fa0" stroke-width="1"/></svg>
<div class="abs" style="left:115px;top:576px"><svg class="fo" width="17" height="14" viewBox="0 0 17 14"><path d="M0.5 0.8 Q0.5 0.3 1 0.3 H5.5 L7 2.2 H13 V5.5 H2.5 L0.5 12 Z" fill="#f59a23"/><path d="M1 13.3 L3.6 6.3 H16.5 L13.7 13.3 Z" fill="#fb9f30"/></svg></div>
<div class="abs tr" style="left:134px;top:568px">饰面板</div>
<div class="abs hdot" style="left:105px;top:606px;width:10px"></div>
<svg class="abs" style="left:100px;top:602px" width="9" height="9" viewBox="0 0 9 9"><defs><linearGradient id="pg" x1="0" y1="0" x2="1" y2="1"><stop offset="0" stop-color="#fff"/><stop offset="1" stop-color="#d8d8d8"/></linearGradient></defs><rect x="0.5" y="0.5" width="8" height="8" rx="1.2" fill="url(#pg)" stroke="#8e8e8e"/><path d="M2 4.5 H7" stroke="#2a4fa0" stroke-width="1"/><path d="M4.5 2 V7" stroke="#2a4fa0" stroke-width="1"/></svg>
<div class="abs" style="left:115px;top:598px"><svg class="fo" width="17" height="14" viewBox="0 0 17 14"><path d="M0.5 0.8 Q0.5 0.3 1 0.3 H5.5 L7 2.2 H13 V5.5 H2.5 L0.5 12 Z" fill="#f59a23"/><path d="M1 13.3 L3.6 6.3 H16.5 L13.7 13.3 Z" fill="#fb9f30"/></svg></div>
<div class="abs tr" style="left:134px;top:590px">饰面砖</div>
<div class="abs hdot" style="left:105px;top:628px;width:10px"></div>
<svg class="abs" style="left:100px;top:624px" width="9" height="9" viewBox="0 0 9 9"><defs><linearGradient id="pg" x1="0" y1="0" x2="1" y2="1"><stop offset="0" stop-color="#fff"/><stop offset="1" stop-color="#d8d8d8"/></linearGradient></defs><rect x="0.5" y="0.5" width="8" height="8" rx="1.2" fill="url(#pg)" stroke="#8e8e8e"/><path d="M2 4.5 H7" stroke="#2a4fa0" stroke-width="1"/><path d="M4.5 2 V7" stroke="#2a4fa0" stroke-width="1"/></svg>
<div class="abs" style="left:115px;top:620px"><svg class="fo" width="17" height="14" viewBox="0 0 17 14"><path d="M0.5 0.8 Q0.5 0.3 1 0.3 H5.5 L7 2.2 H13 V5.5 H2.5 L0.5 12 Z" fill="#f59a23"/><path d="M1 13.3 L3.6 6.3 H16.5 L13.7 13.3 Z" fill="#fb9f30"/></svg></div>
<div class="abs tr" style="left:134px;top:612px">幕墙</div>
<div class="abs hdot" style="left:105px;top:650px;width:10px"></div>
<svg class="abs" style="left:100px;top:646px" width="9" height="9" viewBox="0 0 9 9"><defs><linearGradient id="pg" x1="0" y1="0" x2="1" y2="1"><stop offset="0" stop-color="#fff"/><stop offset="1" stop-color="#d8d8d8"/></linearGradient></defs><rect x="0.5" y="0.5" width="8" height="8" rx="1.2" fill="url(#pg)" stroke="#8e8e8e"/><path d="M2 4.5 H7" stroke="#2a4fa0" stroke-width="1"/><path d="M4.5 2 V7" stroke="#2a4fa0" stroke-width="1"/></svg>
<div class="abs" style="left:115px;top:642px"><svg class="fo" width="17" height="14" viewBox="0 0 17 14"><path d="M0.5 0.8 Q0.5 0.3 1 0.3 H5.5 L7 2.2 H13 V5.5 H2.5 L0.5 12 Z" fill="#f59a23"/><path d="M1 13.3 L3.6 6.3 H16.5 L13.7 13.3 Z" fill="#fb9f30"/></svg></div>
<div class="abs tr" style="left:134px;top:634px">涂饰</div>
<div class="abs hdot" style="left:105px;top:672px;width:10px"></div>
<svg class="abs" style="left:100px;top:668px" width="9" height="9" viewBox="0 0 9 9"><defs><linearGradient id="pg" x1="0" y1="0" x2="1" y2="1"><stop offset="0" stop-color="#fff"/><stop offset="1" stop-color="#d8d8d8"/></linearGradient></defs><rect x="0.5" y="0.5" width="8" height="8" rx="1.2" fill="url(#pg)" stroke="#8e8e8e"/><path d="M2 4.5 H7" stroke="#2a4fa0" stroke-width="1"/><path d="M4.5 2 V7" stroke="#2a4fa0" stroke-width="1"/></svg>
<div class="abs" style="left:115px;top:664px"><svg class="fo" width="17" height="14" viewBox="0 0 17 14"><path d="M0.5 0.8 Q0.5 0.3 1 0.3 H5.5 L7 2.2 H13 V5.5 H2.5 L0.5 12 Z" fill="#f59a23"/><path d="M1 13.3 L3.6 6.3 H16.5 L13.7 13.3 Z" fill="#fb9f30"/></svg></div>
<div class="abs tr" style="left:134px;top:656px">裱糊与软包</div>
<div class="abs hdot" style="left:105px;top:694px;width:10px"></div>
<svg class="abs" style="left:100px;top:690px" width="9" height="9" viewBox="0 0 9 9"><defs><linearGradient id="pg" x1="0" y1="0" x2="1" y2="1"><stop offset="0" stop-color="#fff"/><stop offset="1" stop-color="#d8d8d8"/></linearGradient></defs><rect x="0.5" y="0.5" width="8" height="8" rx="1.2" fill="url(#pg)" stroke="#8e8e8e"/><path d="M2 4.5 H7" stroke="#2a4fa0" stroke-width="1"/><path d="M4.5 2 V7" stroke="#2a4fa0" stroke-width="1"/></svg>
<div class="abs" style="left:115px;top:686px"><svg class="fo" width="17" height="14" viewBox="0 0 17 14"><path d="M0.5 0.8 Q0.5 0.3 1 0.3 H5.5 L7 2.2 H13 V5.5 H2.5 L0.5 12 Z" fill="#f59a23"/><path d="M1 13.3 L3.6 6.3 H16.5 L13.7 13.3 Z" fill="#fb9f30"/></svg></div>
<div class="abs tr" style="left:134px;top:678px">细部</div>
</div>
<div class="abs" style="left:362px;top:88px;width:16px;height:698px;background:#f0f0f0"></div>
<div class="abs" style="left:363px;top:134px;width:14px;height:516px;background:#cdcdcd"></div>
<svg class="abs" style="left:364px;top:93px" width="12" height="8" viewBox="0 0 12 8"><path d="M2.3 6.3 L6 2.6 L9.7 6.3" stroke="#505050" stroke-width="1.7" fill="none"/></svg>
<div class="abs" id="lpborder"></div>
</div>
<div class="abs" style="left:383px;top:79px;width:826px;height:65px;background:#fff;border-left:1px solid #e6e6ee"></div>
<svg class="abs" style="left:393px;top:88px" width="18" height="15" viewBox="0 0 18 15"><path d="M1 6.5 L7.5 1.5 V4.5 Q15.5 4.5 16.5 13 Q13 8.5 7.5 8.5 V11.5 Z" fill="#fff" stroke="#8f8f8f" stroke-width="1.1" stroke-linejoin="round"/></svg>
<svg class="abs" style="left:431px;top:88px" width="18" height="15" viewBox="0 0 18 15"><path d="M17 6.5 L10.5 1.5 V4.5 Q2.5 4.5 1.5 13 Q5 8.5 10.5 8.5 V11.5 Z" fill="#fff" stroke="#8f8f8f" stroke-width="1.1" stroke-linejoin="round"/></svg>
<div class="vsep" style="left:463px;top:85px;height:50px;background:#d0d0d4"></div>
<div class="vsep" style="left:547px;top:85px;height:50px;background:#d0d0d4"></div>
<div class="vsep" style="left:787px;top:85px;height:50px;background:#d0d0d4"></div>
<div class="vsep" style="left:1060px;top:85px;height:50px;background:#d0d0d4"></div>
<div class="vsep" style="left:1164px;top:85px;height:50px;background:#d0d0d4"></div>
<div class="abs" style="left:476px;top:85px;width:20px;height:24px;line-height:24px;font-size:22px;color:#8f8f8f;font-family:'Liberation Sans',sans-serif;text-align:center">Ω</div>
<div class="abs t2" style="left:500px;top:90px;color:#666">符号</div>
<svg class="abs" style="left:393px;top:114px" width="17" height="20" viewBox="0 0 17 20"><path d="M6.5 1 H10.5 V8 L15.5 12 V18.5 H1.5 V12 L6.5 8 Z" fill="#fff" stroke="#8f8f8f" stroke-width="1.1"/><path d="M1.5 13 H15.5 V18.5 H1.5 Z" fill="#c4c4c4" stroke="#8f8f8f" stroke-width="1.1"/></svg>
<div class="abs t2" style="left:414px;top:117px;color:#666">格式刷</div>
<svg class="abs" style="left:478px;top:116px" width="18" height="16" viewBox="0 0 18 16"><rect x="0.5" y="0.5" width="17" height="15" fill="#fff" stroke="#c8c8c8"/><circle cx="6.5" cy="4.5" r="1.8" fill="#c4c4c4"/><path d="M1 15 V11.5 L5.5 7.5 L9 11 L12.5 7 L17 11.5 V15 Z" fill="#c4c4c4"/></svg>
<div class="abs t2" style="left:500px;top:117px;color:#666">插图</div>
<div class="darr" style="left:529px;top:124px"></div>
<svg class="abs" style="left:562px;top:88px" width="19" height="19" viewBox="0 0 19 19"><rect x="1" y="0.8" width="14" height="14.5" fill="#fff" stroke="#8f8f8f" stroke-width="1.1"/><path d="M4 4.5 H10 M4 7.5 H8" stroke="#8f8f8f" stroke-width="1.1"/><circle cx="13.5" cy="13.5" r="4.3" fill="#d4d4d4" stroke="#8f8f8f" stroke-width="1"/><path d="M13.5 11 V13.8 H15.6" stroke="#fff" stroke-width="1.1" fill="none"/></svg>
<div class="abs t2" style="left:584px;top:90px;color:#666">原始记录</div>
<svg class="abs" style="left:562px;top:116px" width="18" height="17" viewBox="0 0 18 17"><rect x="1" y="0.8" width="15.5" height="15" fill="#fff" stroke="#8f8f8f" stroke-width="1.1"/><rect x="4" y="3.8" width="9.5" height="9" fill="#d6d6d6" stroke="#b0b0b0" stroke-width="1"/></svg>
<div class="abs t2" style="left:584px;top:117px;color:#666">学习数据</div>
<div class="darr" style="left:637px;top:124px"></div>
<svg class="abs" style="left:656px;top:88px" width="15" height="16.8" viewBox="0 0 17 19"><path d="M1 1 H10 L13.5 4.5 V16.5 H1 Z" fill="#fff" stroke="#8f8f8f" stroke-width="1.1"/><path d="M3.5 5 H8 M3.5 8 H6.5 M3.5 11 H6" stroke="#8f8f8f" stroke-width="1"/><circle cx="10.8" cy="11.8" r="3.4" fill="#d4d4d4" stroke="#8f8f8f" stroke-width="1"/><path d="M13.2 14.2 L15.5 16.5" stroke="#8f8f8f" stroke-width="1.3"/></svg>
<div class="abs t2" style="left:676px;top:90px;color:#666">报验</div>
<svg class="abs" style="left:656px;top:116px" width="19" height="19" viewBox="0 0 19 19"><path d="M1 1 H10 L13.5 4.5 V16.5 H1 Z" fill="#fff" stroke="#8f8f8f" stroke-width="1.1"/><path d="M3.5 5 H8 M3.5 8 H8 M3.5 11 H6" stroke="#8f8f8f" stroke-width="1"/><path d="M6.5 13.5 Q12 8 17.5 13.5 Q12 19 6.5 13.5 Z" fill="#fff" stroke="#8f8f8f" stroke-width="1"/><circle cx="12" cy="13.5" r="2" fill="#8f8f8f"/></svg>
<div class="abs t2" style="left:676px;top:117px;color:#666">隐蔽</div>
<svg class="abs" style="left:716px;top:88px" width="15" height="16" viewBox="0 0 15 16"><path d="M12.5 4 V1.5 H1.5 L8 7.8 L1.5 14.5 H12.5 V12" fill="none" stroke="#b4b4b4" stroke-width="1.2"/></svg>
<div class="abs t2" style="left:736px;top:90px;color:#666">计算</div>
<div class="darr" style="left:765px;top:95px"></div>
<svg class="abs" style="left:716px;top:116px" width="17" height="16" viewBox="0 0 17 16"><path d="M1 1 V15 H16" stroke="#b8b8b8" stroke-width="1" fill="none"/><rect x="3.5" y="7.5" width="3" height="7" fill="#fff" stroke="#b0b0b0"/><rect x="7.5" y="2.5" width="3" height="12" fill="#fff" stroke="#b0b0b0"/><rect x="11.5" y="6.5" width="3" height="8" fill="#fff" stroke="#b0b0b0"/></svg>
<div class="abs t2" style="left:737px;top:117px;color:#666">汇总</div>
<div class="darr" style="left:765px;top:124px"></div>
<div class="abs st" style="left:802px;top:88px;width:112px;height:20px;border:1px solid #c6c6dc;background:#ebebf0;color:#707070;font-size:12px;line-height:20px;padding-left:3px;text-shadow:none">宋体</div>
<div class="abs" style="left:929px;top:88px;width:47px;height:20px;border:1px solid #c6c6dc;background:#ebebf0;color:#808080;font-size:12px;line-height:19px;padding-left:4px;font-family:'Liberation Serif',serif">10</div>
<div class="darr" style="left:899px;top:96px;border-top-color:#a0a0a0"></div>
<div class="darr" style="left:962px;top:96px;border-top-color:#a0a0a0"></div>
<svg class="abs" style="left:995px;top:90px" width="12" height="12" viewBox="0 0 12 12"><path d="M1 6 H11 M6 1 V11" stroke="#707070" stroke-width="1.6"/></svg>
<svg class="abs" style="left:1027px;top:90px" width="12" height="12" viewBox="0 0 12 12"><path d="M1 6 H11" stroke="#707070" stroke-width="1.6"/></svg>
<div class="abs" style="left:802px;top:115px;width:14px;height:20px;line-height:20px;font-size:15px;font-weight:bold;font-family:'Liberation Sans',sans-serif;color:#7a7a7a;text-align:center">B</div>
<div class="abs" style="left:834px;top:115px;width:14px;height:20px;line-height:20px;font-size:14px;font-style:italic;font-family:'Liberation Serif',serif;color:#7a7a7a;text-align:center">I</div>
<div class="abs" style="left:867px;top:114px;width:14px;height:20px;line-height:20px;font-size:13px;font-weight:bold;font-family:'Liberation Sans',sans-serif;color:#7a7a7a;text-align:center;text-decoration:underline;text-underline-offset:2px">U</div>
<div class="abs" style="left:897px;top:115px;width:20px;height:20px;line-height:20px;font-size:15px;font-weight:bold;font-family:'Liberation Sans',sans-serif;color:#7a7a7a;white-space:nowrap">X<span style="font-size:8px;font-weight:normal;position:relative;top:-6px">2</span></div>
<div class="abs" style="left:931px;top:115px;width:20px;height:20px;line-height:20px;font-size:15px;font-weight:bold;font-family:'Liberation Sans',sans-serif;color:#7a7a7a;white-space:nowrap">X<span style="font-size:8px;font-weight:normal;position:relative;top:2px">2</span></div>
<div class="abs" style="left:958px;top:115px;width:22px;height:20px;line-height:20px;font-size:13px;font-family:'Liberation Sans',sans-serif;color:#7a7a7a;text-decoration:line-through;white-space:nowrap">&nbsp;ab&nbsp;</div>
<div class="abs" style="left:993px;top:114px;width:14px;height:20px;line-height:20px;font-size:14px;font-family:'Liberation Serif',serif;color:#7a7a7a;text-align:center;border-bottom:0">A</div><div class="abs" style="left:993px;top:131px;width:14px;height:1.5px;background:#7a7a7a"></div>
<div class="abs" style="left:1022px;top:112.5px;width:18px;line-height:11px;font-size:14px;font-family:'Liberation Sans',sans-serif;color:#7a7a7a;white-space:nowrap">ab<br><span style="font-size:11px">c↵</span></div>
<svg class="abs" style="left:1074px;top:88px" width="13" height="13" viewBox="0 0 13 13"><path d="M0.5 1.0 H12.5" stroke="#8a8a8a" stroke-width="1"/><path d="M2.0 4.5 H11.0" stroke="#8a8a8a" stroke-width="1"/><path d="M0.5 8.0 H12.5" stroke="#8a8a8a" stroke-width="1"/></svg>
<svg class="abs" style="left:1105px;top:92px" width="13" height="13" viewBox="0 0 13 13"><path d="M0.5 1.0 H12.5" stroke="#8a8a8a" stroke-width="1"/><path d="M2.0 4.5 H11.0" stroke="#8a8a8a" stroke-width="1"/><path d="M0.5 8.0 H12.5" stroke="#8a8a8a" stroke-width="1"/></svg>
<svg class="abs" style="left:1136px;top:95px" width="13" height="13" viewBox="0 0 13 13"><path d="M0.5 1.0 H12.5" stroke="#8a8a8a" stroke-width="1"/><path d="M2.0 4.5 H11.0" stroke="#8a8a8a" stroke-width="1"/><path d="M0.5 8.0 H12.5" stroke="#8a8a8a" stroke-width="1"/></svg>
<svg class="abs" style="left:1074px;top:119px" width="13" height="13" viewBox="0 0 13 13"><path d="M0.5 1.0 H12.5" stroke="#8a8a8a" stroke-width="1"/><path d="M0.5 4.5 H8.5" stroke="#8a8a8a" stroke-width="1"/><path d="M0.5 8.0 H12.5" stroke="#8a8a8a" stroke-width="1"/><path d="M0.5 11.5 H8.5" stroke="#8a8a8a" stroke-width="1"/></svg>
<svg class="abs" style="left:1105px;top:119px" width="13" height="13" viewBox="0 0 13 13"><path d="M0.5 1.0 H12.5" stroke="#8a8a8a" stroke-width="1"/><path d="M2.5 4.5 H10.5" stroke="#8a8a8a" stroke-width="1"/><path d="M0.5 8.0 H12.5" stroke="#8a8a8a" stroke-width="1"/><path d="M2.5 11.5 H10.5" stroke="#8a8a8a" stroke-width="1"/></svg>
<svg class="abs" style="left:1136px;top:119px" width="13" height="13" viewBox="0 0 13 13"><path d="M0.5 1.0 H12.5" stroke="#8a8a8a" stroke-width="1"/><path d="M4.5 4.5 H12.5" stroke="#8a8a8a" stroke-width="1"/><path d="M0.5 8.0 H12.5" stroke="#8a8a8a" stroke-width="1"/><path d="M4.5 11.5 H12.5" stroke="#8a8a8a" stroke-width="1"/></svg>
<svg class="abs" style="left:1180px;top:88px" width="18" height="18" viewBox="0 0 18 18"><rect x="0.5" y="0.5" width="17" height="17" fill="#fff" stroke="#9a9a9a"/><path d="M0.5 0.5 H17.5 V3.5 H3.5 V17.5 H0.5 Z" fill="#cfcfcf" stroke="#9a9a9a"/></svg>
<div class="abs t2" style="left:1201px;top:90px;color:#666">行</div>
<svg class="abs" style="left:1180px;top:116px" width="18" height="18" viewBox="0 0 18 18"><rect x="0.5" y="0.5" width="17" height="17" fill="#fff" stroke="#9a9a9a"/><path d="M9 0.5 V17.5 M0.5 9 H17.5" stroke="#9a9a9a"/></svg>
<div class="abs t2" style="left:1201px;top:117px;color:#666">边</div>
<div class="abs" id="sheet" style="left:382px;top:144px;width:827px;height:721px;background:#f0f0f0;overflow:hidden">
<div class="abs" style="left:40px;top:19px;width:787px;height:702px;background:#dedede;"></div>
<div class="abs" style="left:742px;top:19px;width:85px;height:702px;background:#f0f0f0;"></div>
<div class="abs" style="left:0px;top:0px;width:827px;height:20px;background:#f0f0f0;border-top:1px solid #7c7c7c;border-bottom:1px solid #7c7c7c"></div>
<div class="abs" style="left:0px;top:0px;width:1px;height:721px;background:#a0a0a0;"></div>
<div class="abs" style="left:33px;top:1px;width:1px;height:18px;background:#a8a8a8;"></div>
<div class="abs" style="left:40px;top:1px;width:1px;height:18px;background:#a8a8a8;"></div>
<div class="abs" style="left:63px;top:1px;width:1px;height:18px;background:#a8a8a8;"></div>
<div class="abs" style="left:86px;top:1px;width:1px;height:18px;background:#a8a8a8;"></div>
<div class="abs" style="left:125px;top:1px;width:1px;height:18px;background:#a8a8a8;"></div>
<div class="abs" style="left:152px;top:1px;width:1px;height:18px;background:#a8a8a8;"></div>
<div class="abs" style="left:179px;top:1px;width:1px;height:18px;background:#a8a8a8;"></div>
<div class="abs" style="left:206px;top:1px;width:1px;height:18px;background:#a8a8a8;"></div>
<div class="abs" style="left:233px;top:1px;width:1px;height:18px;background:#a8a8a8;"></div>
<div class="abs" style="left:259px;top:1px;width:1px;height:18px;background:#a8a8a8;"></div>
<div class="abs" style="left:282px;top:1px;width:1px;height:18px;background:#a8a8a8;"></div>
<div class="abs" style="left:297px;top:1px;width:1px;height:18px;background:#a8a8a8;"></div>
<div class="abs" style="left:318px;top:1px;width:1px;height:18px;background:#a8a8a8;"></div>
<div class="abs" style="left:341px;top:1px;width:1px;height:18px;background:#a8a8a8;"></div>
<div class="abs" style="left:369px;top:1px;width:1px;height:18px;background:#a8a8a8;"></div>
<div class="abs" style="left:382px;top:1px;width:1px;height:18px;background:#a8a8a8;"></div>
<div class="abs" style="left:413px;top:1px;width:1px;height:18px;background:#a8a8a8;"></div>
<div class="abs" style="left:439px;top:1px;width:1px;height:18px;background:#a8a8a8;"></div>
<div class="abs" style="left:464px;top:1px;width:1px;height:18px;background:#a8a8a8;"></div>
<div class="abs" style="left:490px;top:1px;width:1px;height:18px;background:#a8a8a8;"></div>
<div class="abs" style="left:516px;top:1px;width:1px;height:18px;background:#a8a8a8;"></div>
<div class="abs" style="left:542px;top:1px;width:1px;height:18px;background:#a8a8a8;"></div>
<div class="abs" style="left:568px;top:1px;width:1px;height:18px;background:#a8a8a8;"></div>
<div class="abs" style="left:594px;top:1px;width:1px;height:18px;background:#a8a8a8;"></div>
<div class="abs" style="left:620px;top:1px;width:1px;height:18px;background:#a8a8a8;"></div>
<div class="abs" style="left:646px;top:1px;width:1px;height:18px;background:#a8a8a8;"></div>
<div class="abs" style="left:672px;top:1px;width:1px;height:18px;background:#a8a8a8;"></div>
<div class="abs" style="left:694px;top:1px;width:1px;height:18px;background:#a8a8a8;"></div>
<div class="abs" style="left:714px;top:1px;width:1px;height:18px;background:#a8a8a8;"></div>
<div class="abs" style="left:718px;top:1px;width:1px;height:18px;background:#a8a8a8;"></div>
<div class="abs" style="left:736px;top:1px;width:1px;height:18px;background:#a8a8a8;"></div>
<div class="abs" style="left:741px;top:1px;width:1px;height:18px;background:#a8a8a8;"></div>
<div class="abs" style="left:745px;top:1px;width:1px;height:18px;background:#a8a8a8;"></div>
<div class="abs colh" style="left:41px;top:2px">B</div>
<div class="abs colh" style="left:64px;top:2px">C</div>
<div class="abs colh" style="left:96px;top:2px">D</div>
<div class="abs colh" style="left:129px;top:2px">E</div>
<div class="abs colh" style="left:156px;top:2px">F</div>
<div class="abs colh" style="left:183px;top:2px">G</div>
<div class="abs colh" style="left:210px;top:2px">H</div>
<div class="abs colh" style="left:236px;top:2px">I</div>
<div class="abs colh" style="left:260px;top:2px">J</div>
<div class="abs colh" style="left:279px;top:2px">K</div>
<div class="abs colh" style="left:297px;top:2px">L</div>
<div class="abs colh" style="left:319px;top:2px">M</div>
<div class="abs colh" style="left:345px;top:2px">N</div>
<div class="abs colh" style="left:365px;top:2px">O</div>
<div class="abs colh" style="left:387px;top:2px">P</div>
<div class="abs colh" style="left:416px;top:2px">Q</div>
<div class="abs colh" style="left:441px;top:2px">R</div>
<div class="abs colh" style="left:467px;top:2px">S</div>
<div class="abs colh" style="left:493px;top:2px">T</div>
<div class="abs colh" style="left:519px;top:2px">U</div>
<div class="abs colh" style="left:545px;top:2px">V</div>
<div class="abs colh" style="left:571px;top:2px">W</div>
<div class="abs colh" style="left:597px;top:2px">X</div>
<div class="abs colh" style="left:623px;top:2px">Y</div>
<div class="abs colh" style="left:649px;top:2px">Z</div>
<div class="abs colh" style="left:673px;top:2px">AA</div>
<div class="abs colh" style="left:694px;top:2px">AC</div>
<div class="abs colh" style="left:717px;top:2px">AE</div>
<svg class="abs" style="left:21px;top:7px" width="12" height="12" viewBox="0 0 12 12"><path d="M0 12 L12 0 M4 12 L12 4 M8 12 L12 8" stroke="#a4a4a4" stroke-width="1.3"/></svg>
<div class="abs" style="left:1px;top:19px;width:32px;height:702px;background:#f1f1f1;"></div>
<div class="abs" style="left:1px;top:24px;width:32px;height:1px;background:#9a9a9a;"></div>
<div class="abs" style="left:1px;top:84px;width:32px;height:1px;background:#9a9a9a;"></div>
<div class="abs" style="left:1px;top:46px;width:32px;height:18px;line-height:18px;text-align:center;font-weight:bold;font-size:13px;font-family:'Liberation Sans',sans-serif">2</div>
<div class="abs" style="left:1px;top:103px;width:32px;height:1px;background:#9a9a9a;"></div>
<div class="abs" style="left:1px;top:85px;width:32px;height:18px;line-height:18px;text-align:center;font-weight:bold;font-size:13px;font-family:'Liberation Sans',sans-serif">3</div>
<div class="abs" style="left:1px;top:107px;width:32px;height:1px;background:#9a9a9a;"></div>
<div class="abs" style="left:1px;top:152px;width:32px;height:1px;background:#9a9a9a;"></div>
<div class="abs" style="left:1px;top:121px;width:32px;height:18px;line-height:18px;text-align:center;font-weight:bold;font-size:13px;font-family:'Liberation Sans',sans-serif">5</div>
<div class="abs" style="left:1px;top:197px;width:32px;height:1px;background:#9a9a9a;"></div>
<div class="abs" style="left:1px;top:166px;width:32px;height:18px;line-height:18px;text-align:center;font-weight:bold;font-size:13px;font-family:'Liberation Sans',sans-serif">6</div>
<div class="abs" style="left:1px;top:242px;width:32px;height:1px;background:#9a9a9a;"></div>
<div class="abs" style="left:1px;top:211px;width:32px;height:18px;line-height:18px;text-align:center;font-weight:bold;font-size:13px;font-family:'Liberation Sans',sans-serif">7</div>
<div class="abs" style="left:1px;top:287px;width:32px;height:1px;background:#9a9a9a;"></div>
<div class="abs" style="left:1px;top:256px;width:32px;height:18px;line-height:18px;text-align:center;font-weight:bold;font-size:13px;font-family:'Liberation Sans',sans-serif">8</div>
<div class="abs" style="left:1px;top:327px;width:32px;height:1px;background:#9a9a9a;"></div>
<div class="abs" style="left:1px;top:299px;width:32px;height:18px;line-height:18px;text-align:center;font-weight:bold;font-size:13px;font-family:'Liberation Sans',sans-serif">9</div>
<div class="abs" style="left:1px;top:400px;width:32px;height:1px;background:#9a9a9a;"></div>
<div class="abs" style="left:1px;top:355px;width:32px;height:18px;line-height:18px;text-align:center;font-weight:bold;font-size:13px;font-family:'Liberation Serif',serif">10</div>
<div class="abs" style="left:1px;top:473px;width:32px;height:1px;background:#9a9a9a;"></div>
<div class="abs" style="left:1px;top:428px;width:32px;height:18px;line-height:18px;text-align:center;font-weight:bold;font-size:13px;font-family:'Liberation Serif',serif">11</div>
<div class="abs" style="left:1px;top:546px;width:32px;height:1px;background:#9a9a9a;"></div>
<div class="abs" style="left:1px;top:501px;width:32px;height:18px;line-height:18px;text-align:center;font-weight:bold;font-size:13px;font-family:'Liberation Serif',serif">12</div>
<div class="abs" style="left:1px;top:619px;width:32px;height:1px;background:#9a9a9a;"></div>
<div class="abs" style="left:1px;top:574px;width:32px;height:18px;line-height:18px;text-align:center;font-weight:bold;font-size:13px;font-family:'Liberation Serif',serif">13</div>
<div class="abs" style="left:1px;top:692px;width:32px;height:1px;background:#9a9a9a;"></div>
<div class="abs" style="left:1px;top:647px;width:32px;height:18px;line-height:18px;text-align:center;font-weight:bold;font-size:13px;font-family:'Liberation Serif',serif">14</div>
<div class="abs" style="left:1px;top:765px;width:32px;height:1px;background:#9a9a9a;"></div>
<div class="abs" style="left:16px;top:21px;width:2px;height:2px;background:#000"></div>
<div class="abs" style="left:33px;top:19px;width:2px;height:702px;background:#111;"></div>
<div class="abs" style="left:35px;top:19px;width:5px;height:702px;background:#f0f0f0;"></div>
<div class="abs" style="left:37px;top:19px;width:3px;height:88px;background:#111;"></div>
<div class="abs" style="left:33px;top:19px;width:7px;height:2px;background:#111;"></div>
<div class="abs" style="left:39px;top:106px;width:1px;height:615px;background:#111;"></div>
<div class="abs" style="left:39px;top:106px;width:788px;height:2px;background:#111;"></div>
<div class="abs" style="left:39px;top:152px;width:788px;height:1px;background:#111;"></div>
<div class="abs" style="left:39px;top:197px;width:788px;height:1px;background:#111;"></div>
<div class="abs" style="left:39px;top:242px;width:788px;height:1px;background:#111;"></div>
<div class="abs" style="left:39px;top:287px;width:788px;height:1px;background:#111;"></div>
<div class="abs" style="left:39px;top:327px;width:788px;height:1px;background:#111;"></div>
<div class="abs" style="left:63px;top:400px;width:764px;height:1px;background:#111;"></div>
<div class="abs" style="left:63px;top:473px;width:764px;height:1px;background:#111;"></div>
<div class="abs" style="left:63px;top:619px;width:764px;height:1px;background:#111;"></div>
<div class="abs" style="left:63px;top:692px;width:764px;height:1px;background:#111;"></div>
<div class="abs" style="left:39px;top:546px;width:788px;height:1px;background:#111;"></div>
<div class="abs" style="left:63px;top:327px;width:1px;height:394px;background:#111;"></div>
<div class="abs" style="left:85px;top:327px;width:1px;height:394px;background:#111;"></div>
<div class="abs st cell" style="left:44px;top:114px">单位<span class="p">(</span>子单位<span class="p">)</span></div>
<div class="abs st cell" style="left:57px;top:128px">工程名称</div>
<div class="abs st cell" style="left:64px;top:160px">总承包</div>
<div class="abs st cell" style="left:57px;top:173px">施工单位</div>
<div class="abs st cell" style="left:50px;top:204px">专业承<span class="p">(</span>分<span class="p">)</span></div>
<div class="abs st cell" style="left:64px;top:218px">包单位</div>
<div class="abs st cell" style="left:50px;top:249px">施工、验收</div>
<div class="abs st cell" style="left:70px;top:263px">依据</div>
<div class="abs st cell" style="left:45px;top:409px">主</div>
<div class="abs st cell" style="left:45px;top:422px">控</div>
<div class="abs st cell" style="left:45px;top:435px">项</div>
<div class="abs st cell" style="left:45px;top:448px">目</div>
<div class="abs st cell" style="left:45px;top:664px">一</div>
<div class="abs st cell" style="left:45px;top:677px">般</div>
<div class="abs st cell" style="left:45px;top:690px">项</div>
<div class="abs st cell" style="left:45px;top:703px">目</div>
<div class="abs st cell" style="left:71px;top:355px">1</div>
<div class="abs st cell" style="left:71px;top:428px">2</div>
<div class="abs st cell" style="left:71px;top:501px">3</div>
<div class="abs st cell" style="left:71px;top:574px">1</div>
<div class="abs st cell" style="left:71px;top:647px">2</div>
<div class="abs st cell" style="left:87px;top:355px">防</div>
<div class="abs st cell" style="left:87px;top:422px">防</div>
<div class="abs st cell" style="left:87px;top:435px">性</div>
<div class="abs st cell" style="left:87px;top:494px">水</div>
<div class="abs st cell" style="left:87px;top:507px">应</div>
<div class="abs st cell" style="left:87px;top:561px">水</div>
<div class="abs st cell" style="left:87px;top:574px">、</div>
<div class="abs st cell" style="left:87px;top:587px">、</div>
<div class="abs st cell" style="left:87px;top:634px">水</div>
<div class="abs st cell" style="left:87px;top:647px">位</div>
<div class="abs st cell" style="left:87px;top:660px">顺</div>
<div class="abs st cell" style="left:89px;top:713px"><span style="letter-spacing:0.8px">水泥砂浆防水层的平均厚度</span></div>
<div class="abs st cell" style="left:269px;top:713px">厚度≥设计</div>
<div class="abs" style="left:259px;top:713px;width:1px;height:8px;background:#111;"></div>
<div class="abs" style="left:325px;top:713px;width:1px;height:8px;background:#111;"></div>
<div class="abs" style="left:338px;top:713px;width:1px;height:8px;background:#111;"></div>
<div class="abs" style="left:413px;top:713px;width:1px;height:8px;background:#111;"></div>
<div class="abs" style="left:438px;top:713px;width:1px;height:8px;background:#111;"></div>
<div class="abs" style="left:464px;top:713px;width:1px;height:8px;background:#111;"></div>
<div class="abs" style="left:490px;top:713px;width:1px;height:8px;background:#111;"></div>
<div class="abs" style="left:516px;top:713px;width:1px;height:8px;background:#111;"></div>
<div class="abs" style="left:542px;top:713px;width:1px;height:8px;background:#111;"></div>
<div class="abs" style="left:568px;top:713px;width:1px;height:8px;background:#111;"></div>
<div class="abs" style="left:594px;top:713px;width:1px;height:8px;background:#111;"></div>
<div class="abs" style="left:620px;top:713px;width:1px;height:8px;background:#111;"></div>
<div class="abs" style="left:646px;top:713px;width:1px;height:8px;background:#111;"></div>
<div class="abs" style="left:672px;top:713px;width:1px;height:8px;background:#111;"></div>
<div class="abs" style="left:740px;top:19px;width:2px;height:702px;background:#111;"></div>
</div>
<div class="abs" style="left:474px;top:154px;width:4px;height:706px;background:linear-gradient(90deg,rgba(0,0,0,0),rgba(0,0,0,0.14))"></div>
<div class="abs" id="dlg" style="left:478px;top:152px;width:731px;height:706px;background:#efeff4;overflow:hidden;border-left:1px solid #6c7c8e">
<div class="abs" style="left:0;top:705px;width:731px;height:1px;background:#9aa2ae"></div>
<div class="abs" style="left:-1px;top:0px;width:732px;height:40px;background:#3a75c4;color:#fff;font-size:14px;line-height:40px;padding-left:9px;letter-spacing:0.6px">云资料库</div>
<div class="abs" style="left:7px;top:51px;width:271px;height:650px;border:1px solid #c9d3e6"></div>
<div class="abs st" style="left:15px;top:43px;width:55px;height:16px;background:#efeff4;font-size:12px;line-height:16px;padding-left:4px;white-space:nowrap">资料目录</div>
<div class="abs" style="left:9px;top:61px;width:268px;height:638px;background:#fff"></div>
<div class="abs" style="left:279px;top:40px;width:3px;height:665px;background:#e6e6ec"></div>
<div class="abs" style="left:283px;top:51px;width:460px;height:650px;border:1px solid #c9d3e6"></div>
<div class="abs st" style="left:290px;top:43px;width:55px;height:16px;background:#efeff4;font-size:12px;line-height:16px;padding-left:4px;white-space:nowrap">目录文档</div>
<div class="abs" style="left:284px;top:61px;width:450px;height:640px;background:#fefefe"></div>
<div class="abs st" style="left:314px;top:72px;width:30px;height:16px;font-size:12px;line-height:16px;white-space:nowrap">查询</div>
<div class="abs" style="left:352px;top:66px;width:221px;height:26px;background:#fff;border:1px solid #767676"></div>
<div class="abs st" style="left:582px;top:72px;width:160px;height:16px;font-size:12px;line-height:16px;white-space:nowrap;color:#128a12">搜索可以根据文档名称过滤云资料</div>
<div class="abs" style="left:284px;top:98px;width:450px;height:600px;background:#fff;border-top:1px solid #828282;border-left:1px solid #828282"></div>
<div class="abs" style="left:285px;top:122px;width:450px;height:1px;background:#8a8a8a"></div>
<div class="abs" style="left:334px;top:99px;width:1px;height:23px;background:#dcdcdc"></div>
<div class="abs" style="left:334px;top:122px;width:1px;height:576px;background:#9a9a9a"></div>
<div class="abs" style="left:303px;top:104px;width:13px;height:13px;border:1px solid #c4c8de;background:#fff"></div>
<div class="abs st" style="left:342px;top:103px;width:100px;height:16px;font-size:12px;line-height:16px;white-space:nowrap">文档名称</div>
<div class="abs" style="left:285px;top:145px;width:450px;height:1px;background:#a2a2a2"></div>
<div class="abs" style="left:303px;top:127px;width:13px;height:13px;border:1px solid #2a2a2a;background:#fff"></div>
<div class="abs dt" style="left:339px;top:127px;width:400px;height:16px;font-size:12px;line-height:16px;white-space:nowrap;color:#000"><span class="l">A</span> 建筑工程施工质量验收统一标准（<span class="l">GB50300-2013</span>）</div>
<div class="abs" style="left:285px;top:168px;width:450px;height:1px;background:#a2a2a2"></div>
<div class="abs" style="left:303px;top:150px;width:13px;height:13px;border:1px solid #2a2a2a;background:#fff"></div>
<div class="abs dt" style="left:339px;top:150px;width:400px;height:16px;font-size:12px;line-height:16px;white-space:nowrap;color:#0a0ae6"><span class="l">B</span>建筑地基基础工程施工质量验收标准(<span class="l">GB50202-2018</span>)</div>
<div class="abs" style="left:285px;top:191px;width:450px;height:1px;background:#a2a2a2"></div>
<div class="abs" style="left:303px;top:173px;width:13px;height:13px;border:1px solid #2a2a2a;background:#fff"></div>
<div class="abs dt" style="left:339px;top:173px;width:400px;height:16px;font-size:12px;line-height:16px;white-space:nowrap;color:#000"><span class="l">C</span> 砌体结构工程施工质量验收规范（<span class="l">GB50203-2011</span>）</div>
<div class="abs" style="left:285px;top:214px;width:450px;height:1px;background:#a2a2a2"></div>
<div class="abs" style="left:303px;top:196px;width:13px;height:13px;border:1px solid #2a2a2a;background:#fff"></div>
<div class="abs dt" style="left:339px;top:196px;width:400px;height:16px;font-size:12px;line-height:16px;white-space:nowrap;color:#000"><span class="l">D</span> 混凝土结构工程施工质量验收规范（<span class="l">GB50204-2015</span>）</div>
<div class="abs" style="left:285px;top:237px;width:450px;height:1px;background:#a2a2a2"></div>
<div class="abs" style="left:303px;top:219px;width:13px;height:13px;border:1px solid #2a2a2a;background:#fff"></div>
<div class="abs dt" style="left:339px;top:219px;width:400px;height:16px;font-size:12px;line-height:16px;white-space:nowrap;color:#0a0ae6"><span class="l">E</span>钢结构工程施工质量验收规范（<span class="l">GB50205-2020</span>）</div>
<div class="abs" style="left:285px;top:260px;width:450px;height:1px;background:#a2a2a2"></div>
<div class="abs" style="left:303px;top:242px;width:13px;height:13px;border:1px solid #2a2a2a;background:#fff"></div>
<div class="abs dt" style="left:339px;top:242px;width:400px;height:16px;font-size:12px;line-height:16px;white-space:nowrap;color:#000"><span class="l">F</span> 木结构工程施工质量验收规范（<span class="l">GB50206</span>－<span class="l">2012</span>）</div>
<div class="abs" style="left:285px;top:283px;width:450px;height:1px;background:#a2a2a2"></div>
<div class="abs" style="left:303px;top:265px;width:13px;height:13px;border:1px solid #2a2a2a;background:#fff"></div>
<div class="abs dt" style="left:339px;top:265px;width:400px;height:16px;font-size:12px;line-height:16px;white-space:nowrap;color:#000"><span class="l">G</span> 屋面工程质量验收规范（<span class="l">GB50207-2012</span>）</div>
<div class="abs" style="left:285px;top:306px;width:450px;height:1px;background:#a2a2a2"></div>
<div class="abs" style="left:303px;top:288px;width:13px;height:13px;border:1px solid #2a2a2a;background:#fff"></div>
<div class="abs dt" style="left:339px;top:288px;width:400px;height:16px;font-size:12px;line-height:16px;white-space:nowrap;color:#0a0ae6"><span class="l">H</span> 地下防水工程质量验收规范（<span class="l">GB50208-2011</span>）</div>
<div class="abs" style="left:285px;top:329px;width:450px;height:1px;background:#a2a2a2"></div>
<div class="abs" style="left:303px;top:311px;width:13px;height:13px;border:1px solid #2a2a2a;background:#fff"></div>
<div class="abs dt" style="left:339px;top:311px;width:400px;height:16px;font-size:12px;line-height:16px;white-space:nowrap;color:#000"><span class="l">I</span> 建筑地面工程施工质量验收规范（<span class="l">GB50209-2010</span>）</div>
<div class="abs" style="left:285px;top:352px;width:450px;height:1px;background:#a2a2a2"></div>
<div class="abs" style="left:303px;top:334px;width:13px;height:13px;border:1px solid #2a2a2a;background:#fff"></div>
<div class="abs dt" style="left:339px;top:334px;width:400px;height:16px;font-size:12px;line-height:16px;white-space:nowrap;color:#0a0ae6"><span class="l">J</span>建筑装饰装修工程质量验收标准(<span class="l">GB50210-2018</span>)</div>
<div class="abs" style="left:285px;top:375px;width:450px;height:1px;background:#a2a2a2"></div>
<div class="abs" style="left:303px;top:357px;width:13px;height:13px;border:1px solid #2a2a2a;background:#fff"></div>
<div class="abs dt" style="left:339px;top:357px;width:400px;height:16px;font-size:12px;line-height:16px;white-space:nowrap;color:#0a0ae6"><span class="l">K</span> 建筑给水排水及采暖工程施工质量验收规范（<span class="l">GB50242-2002</span>）</div>
<div class="abs" style="left:285px;top:398px;width:450px;height:1px;background:#a2a2a2"></div>
<div class="abs" style="left:303px;top:380px;width:13px;height:13px;border:1px solid #2a2a2a;background:#fff"></div>
<div class="abs dt" style="left:339px;top:380px;width:400px;height:16px;font-size:12px;line-height:16px;white-space:nowrap;color:#000"><span class="l">L</span>通风与空调工程施工质量验收规范(<span class="l">GB50243-2016</span>)</div>
<div class="abs" style="left:285px;top:421px;width:450px;height:1px;background:#a2a2a2"></div>
<div class="abs" style="left:303px;top:403px;width:13px;height:13px;border:1px solid #2a2a2a;background:#fff"></div>
<div class="abs dt" style="left:339px;top:403px;width:400px;height:16px;font-size:12px;line-height:16px;white-space:nowrap;color:#0a0ae6"><span class="l">M</span> 建筑电气工程施工质量验收规范(<span class="l">GB50303-2015</span>)</div>
<div class="abs" style="left:285px;top:444px;width:450px;height:1px;background:#a2a2a2"></div>
<div class="abs" style="left:303px;top:426px;width:13px;height:13px;border:1px solid #2a2a2a;background:#fff"></div>
<div class="abs dt" style="left:339px;top:426px;width:400px;height:16px;font-size:12px;line-height:16px;white-space:nowrap;color:#000"><span class="l">N</span> 电梯工程施工质量验收规范（<span class="l">GB50310-2002</span>）</div>
<div class="abs" style="left:285px;top:467px;width:450px;height:1px;background:#a2a2a2"></div>
<div class="abs" style="left:303px;top:449px;width:13px;height:13px;border:1px solid #2a2a2a;background:#fff"></div>
<div class="abs dt" style="left:339px;top:449px;width:400px;height:16px;font-size:12px;line-height:16px;white-space:nowrap;color:#0a0ae6"><span class="l">O</span> 智能建筑工程质量验收规范（<span class="l">GB50339-2013</span>）</div>
<div class="abs" style="left:285px;top:490px;width:450px;height:1px;background:#a2a2a2"></div>
<div class="abs" style="left:303px;top:472px;width:13px;height:13px;border:1px solid #2a2a2a;background:#fff"></div>
<div class="abs dt" style="left:339px;top:472px;width:400px;height:16px;font-size:12px;line-height:16px;white-space:nowrap;color:#0a0ae6"><span class="l">P</span> 建设工程监理规范 （<span class="l">GB50319-2013</span>）</div>
<div class="abs" style="left:285px;top:513px;width:450px;height:1px;background:#a2a2a2"></div>
<div class="abs" style="left:303px;top:495px;width:13px;height:13px;border:1px solid #2a2a2a;background:#fff"></div>
<div class="abs dt" style="left:339px;top:495px;width:400px;height:16px;font-size:12px;line-height:16px;white-space:nowrap;color:#000"><span class="l">Q</span> 建设工程项目管理规范（<span class="l">GB</span>／<span class="l">T50326-2006</span>）</div>
<div class="abs" style="left:285px;top:536px;width:450px;height:1px;background:#a2a2a2"></div>
<div class="abs" style="left:303px;top:518px;width:13px;height:13px;border:1px solid #2a2a2a;background:#fff"></div>
<div class="abs dt" style="left:339px;top:518px;width:400px;height:16px;font-size:12px;line-height:16px;white-space:nowrap;color:#000"><span class="l">R</span>建筑节能工程施工质量验收规范（<span class="l">GB50411-2019</span>）</div>
<div class="abs" style="left:285px;top:559px;width:450px;height:1px;background:#a2a2a2"></div>
<div class="abs" style="left:303px;top:541px;width:13px;height:13px;border:1px solid #2a2a2a;background:#fff"></div>
<div class="abs dt" style="left:339px;top:541px;width:400px;height:16px;font-size:12px;line-height:16px;white-space:nowrap;color:#000"><span class="l">S</span>自动喷水灭火系统施工及验收规范（<span class="l">GB50261-2017</span>）</div>
<div class="abs" style="left:285px;top:582px;width:450px;height:1px;background:#a2a2a2"></div>
<div class="abs" style="left:303px;top:564px;width:13px;height:13px;border:1px solid #2a2a2a;background:#fff"></div>
<div class="abs dt" style="left:339px;top:564px;width:400px;height:16px;font-size:12px;line-height:16px;white-space:nowrap;color:#0a0ae6"><span class="l">T</span> 火灾自动报警系统施工及验收规范（<span class="l">GB_50166-2007</span>）</div>
<div class="abs" style="left:285px;top:605px;width:450px;height:1px;background:#a2a2a2"></div>
<div class="abs" style="left:303px;top:587px;width:13px;height:13px;border:1px solid #2a2a2a;background:#fff"></div>
<div class="abs dt" style="left:339px;top:587px;width:400px;height:16px;font-size:12px;line-height:16px;white-space:nowrap;color:#0a0ae6"><span class="l">U</span> 气体灭火系统施工及验收规范(含条文说明)（<span class="l">GB50263-2007</span>）</div>
<div class="abs" style="left:285px;top:628px;width:450px;height:1px;background:#a2a2a2"></div>
<div class="abs" style="left:303px;top:610px;width:13px;height:13px;border:1px solid #2a2a2a;background:#fff"></div>
<div class="abs dt" style="left:339px;top:610px;width:400px;height:16px;font-size:12px;line-height:16px;white-space:nowrap;color:#000"><span class="l">V</span> 建筑物防雷工程施工与质量验收规范（<span class="l">GB50601-2010</span>）</div>
<div class="abs" style="left:285px;top:651px;width:450px;height:1px;background:#a2a2a2"></div>
<div class="abs" style="left:303px;top:633px;width:13px;height:13px;border:1px solid #2a2a2a;background:#fff"></div>
<div class="abs dt" style="left:339px;top:633px;width:400px;height:16px;font-size:12px;line-height:16px;white-space:nowrap;color:#000"><span class="l">W</span> 铝合金结构工程施工质量验收规范（<span class="l">GB50576-2010</span>）</div>
<div class="abs" style="left:285px;top:674px;width:450px;height:1px;background:#a2a2a2"></div>
<div class="abs" style="left:303px;top:656px;width:13px;height:13px;border:1px solid #2a2a2a;background:#fff"></div>
<div class="abs dt" style="left:339px;top:656px;width:400px;height:16px;font-size:12px;line-height:16px;white-space:nowrap;color:#000">大体积混凝土施工标准（<span class="l">GB50496-2018</span>）</div>
<div class="abs" style="left:285px;top:697px;width:450px;height:1px;background:#a2a2a2"></div>
<div class="abs" style="left:303px;top:679px;width:13px;height:13px;border:1px solid #2a2a2a;background:#fff"></div>
<div class="abs dt" style="left:339px;top:679px;width:400px;height:16px;font-size:12px;line-height:16px;white-space:nowrap;color:#000">钢<span class="l">-</span>混凝土组合结构施工规范(<span class="l">GB50901-2013</span>)</div>
<div class="abs vdot" style="left:21px;top:76px;width:1px;height:436px;"></div>
<div class="abs vdot" style="left:40px;top:80px;width:1px;height:112px;"></div>
<div class="abs vdot" style="left:40px;top:320px;width:1px;height:132px;"></div>
<div class="abs hdot" style="left:22px;top:72px;width:8px;height:1px;"></div>
<svg class="abs" style="left:17px;top:67px" width="9" height="9" viewBox="0 0 9 9"><defs><linearGradient id="pg" x1="0" y1="0" x2="1" y2="1"><stop offset="0" stop-color="#fff"/><stop offset="1" stop-color="#d8d8d8"/></linearGradient></defs><rect x="0.5" y="0.5" width="8" height="8" rx="1.2" fill="url(#pg)" stroke="#8e8e8e"/><path d="M2 4.5 H7" stroke="#2a4fa0" stroke-width="1"/></svg>
<div class="abs st" style="left:32px;top:61px;width:200px;height:16px;font-size:12px;line-height:16px;white-space:nowrap">安全资料库</div>
<div class="abs hdot" style="left:41px;top:92px;width:8px;height:1px;"></div>
<div class="abs st" style="left:51px;top:81px;width:200px;height:16px;font-size:12px;line-height:16px;white-space:nowrap">安全技术交底示例</div>
<div class="abs hdot" style="left:41px;top:112px;width:8px;height:1px;"></div>
<div class="abs st" style="left:51px;top:101px;width:200px;height:16px;font-size:12px;line-height:16px;white-space:nowrap">安全生产管理制度</div>
<div class="abs hdot" style="left:41px;top:132px;width:8px;height:1px;"></div>
<div class="abs st" style="left:51px;top:121px;width:200px;height:16px;font-size:12px;line-height:16px;white-space:nowrap">安全生产责任制</div>
<div class="abs hdot" style="left:41px;top:152px;width:8px;height:1px;"></div>
<svg class="abs" style="left:36px;top:147px" width="9" height="9" viewBox="0 0 9 9"><defs><linearGradient id="pg" x1="0" y1="0" x2="1" y2="1"><stop offset="0" stop-color="#fff"/><stop offset="1" stop-color="#d8d8d8"/></linearGradient></defs><rect x="0.5" y="0.5" width="8" height="8" rx="1.2" fill="url(#pg)" stroke="#8e8e8e"/><path d="M2 4.5 H7" stroke="#2a4fa0" stroke-width="1"/><path d="M4.5 2 V7" stroke="#2a4fa0" stroke-width="1"/></svg>
<div class="abs st" style="left:51px;top:141px;width:200px;height:16px;font-size:12px;line-height:16px;white-space:nowrap">施工方案示例</div>
<div class="abs hdot" style="left:41px;top:172px;width:8px;height:1px;"></div>
<div class="abs st" style="left:51px;top:161px;width:200px;height:16px;font-size:12px;line-height:16px;white-space:nowrap">应急预案</div>
<div class="abs hdot" style="left:41px;top:192px;width:8px;height:1px;"></div>
<div class="abs st" style="left:51px;top:181px;width:200px;height:16px;font-size:12px;line-height:16px;white-space:nowrap">资料管理规程</div>
<div class="abs hdot" style="left:22px;top:212px;width:8px;height:1px;"></div>
<div class="abs st" style="left:32px;top:201px;width:200px;height:16px;font-size:12px;line-height:16px;white-space:nowrap">电力资料库</div>
<div class="abs hdot" style="left:22px;top:232px;width:8px;height:1px;"></div>
<div class="abs st" style="left:32px;top:221px;width:200px;height:16px;font-size:12px;line-height:16px;white-space:nowrap">高标准农田资料库</div>
<div class="abs hdot" style="left:22px;top:252px;width:8px;height:1px;"></div>
<div class="abs st" style="left:32px;top:241px;width:200px;height:16px;font-size:12px;line-height:16px;white-space:nowrap">公路资料库</div>
<div class="abs hdot" style="left:22px;top:272px;width:8px;height:1px;"></div>
<div class="abs st" style="left:32px;top:261px;width:200px;height:16px;font-size:12px;line-height:16px;white-space:nowrap">国家电网资料库</div>
<div class="abs hdot" style="left:22px;top:292px;width:8px;height:1px;"></div>
<div class="abs st" style="left:32px;top:281px;width:200px;height:16px;font-size:12px;line-height:16px;white-space:nowrap">河北地区资料库</div>
<div class="abs hdot" style="left:22px;top:312px;width:8px;height:1px;"></div>
<svg class="abs" style="left:17px;top:307px" width="9" height="9" viewBox="0 0 9 9"><defs><linearGradient id="pg" x1="0" y1="0" x2="1" y2="1"><stop offset="0" stop-color="#fff"/><stop offset="1" stop-color="#d8d8d8"/></linearGradient></defs><rect x="0.5" y="0.5" width="8" height="8" rx="1.2" fill="url(#pg)" stroke="#8e8e8e"/><path d="M2 4.5 H7" stroke="#2a4fa0" stroke-width="1"/></svg>
<div class="abs st" style="left:32px;top:301px;width:200px;height:16px;font-size:12px;line-height:16px;white-space:nowrap">建筑资料库</div>
<div class="abs hdot" style="left:41px;top:332px;width:8px;height:1px;"></div>
<svg class="abs" style="left:36px;top:327px" width="9" height="9" viewBox="0 0 9 9"><defs><linearGradient id="pg" x1="0" y1="0" x2="1" y2="1"><stop offset="0" stop-color="#fff"/><stop offset="1" stop-color="#d8d8d8"/></linearGradient></defs><rect x="0.5" y="0.5" width="8" height="8" rx="1.2" fill="url(#pg)" stroke="#8e8e8e"/><path d="M2 4.5 H7" stroke="#2a4fa0" stroke-width="1"/><path d="M4.5 2 V7" stroke="#2a4fa0" stroke-width="1"/></svg>
<div class="abs st" style="left:51px;top:321px;width:200px;height:16px;font-size:12px;line-height:16px;white-space:nowrap">施工方案</div>
<div class="abs hdot" style="left:41px;top:352px;width:8px;height:1px;"></div>
<svg class="abs" style="left:36px;top:347px" width="9" height="9" viewBox="0 0 9 9"><defs><linearGradient id="pg" x1="0" y1="0" x2="1" y2="1"><stop offset="0" stop-color="#fff"/><stop offset="1" stop-color="#d8d8d8"/></linearGradient></defs><rect x="0.5" y="0.5" width="8" height="8" rx="1.2" fill="url(#pg)" stroke="#8e8e8e"/><path d="M2 4.5 H7" stroke="#2a4fa0" stroke-width="1"/><path d="M4.5 2 V7" stroke="#2a4fa0" stroke-width="1"/></svg>
<div class="abs st" style="left:51px;top:341px;width:200px;height:16px;font-size:12px;line-height:16px;white-space:nowrap">施工工法与施工工艺</div>
<div class="abs hdot" style="left:41px;top:372px;width:8px;height:1px;"></div>
<div class="abs" style="left:49px;top:361px;width:80px;height:20px;background:#0a6fd6;border:1px dotted #e8a040"></div>
<div class="abs st" style="left:51px;top:361px;width:100px;height:16px;font-size:12px;line-height:16px;white-space:nowrap;color:#fff">施工验收规范</div>
<div class="abs hdot" style="left:41px;top:392px;width:8px;height:1px;"></div>
<svg class="abs" style="left:36px;top:387px" width="9" height="9" viewBox="0 0 9 9"><defs><linearGradient id="pg" x1="0" y1="0" x2="1" y2="1"><stop offset="0" stop-color="#fff"/><stop offset="1" stop-color="#d8d8d8"/></linearGradient></defs><rect x="0.5" y="0.5" width="8" height="8" rx="1.2" fill="url(#pg)" stroke="#8e8e8e"/><path d="M2 4.5 H7" stroke="#2a4fa0" stroke-width="1"/><path d="M4.5 2 V7" stroke="#2a4fa0" stroke-width="1"/></svg>
<div class="abs st" style="left:51px;top:381px;width:200px;height:16px;font-size:12px;line-height:16px;white-space:nowrap">施工组织设计</div>
<div class="abs hdot" style="left:41px;top:412px;width:8px;height:1px;"></div>
<svg class="abs" style="left:36px;top:407px" width="9" height="9" viewBox="0 0 9 9"><defs><linearGradient id="pg" x1="0" y1="0" x2="1" y2="1"><stop offset="0" stop-color="#fff"/><stop offset="1" stop-color="#d8d8d8"/></linearGradient></defs><rect x="0.5" y="0.5" width="8" height="8" rx="1.2" fill="url(#pg)" stroke="#8e8e8e"/><path d="M2 4.5 H7" stroke="#2a4fa0" stroke-width="1"/><path d="M4.5 2 V7" stroke="#2a4fa0" stroke-width="1"/></svg>
<div class="abs st" style="left:51px;top:401px;width:200px;height:16px;font-size:12px;line-height:16px;white-space:nowrap">图库</div>
<div class="abs hdot" style="left:41px;top:432px;width:8px;height:1px;"></div>
<div class="abs st" style="left:51px;top:421px;width:200px;height:16px;font-size:12px;line-height:16px;white-space:nowrap">应急预案</div>
<div class="abs hdot" style="left:41px;top:452px;width:8px;height:1px;"></div>
<div class="abs st" style="left:51px;top:441px;width:200px;height:16px;font-size:12px;line-height:16px;white-space:nowrap">资料管理规程</div>
<div class="abs hdot" style="left:22px;top:472px;width:8px;height:1px;"></div>
<div class="abs st" style="left:32px;top:461px;width:200px;height:16px;font-size:12px;line-height:16px;white-space:nowrap">煤炭资料库</div>
<div class="abs hdot" style="left:22px;top:492px;width:8px;height:1px;"></div>
<svg class="abs" style="left:17px;top:487px" width="9" height="9" viewBox="0 0 9 9"><defs><linearGradient id="pg" x1="0" y1="0" x2="1" y2="1"><stop offset="0" stop-color="#fff"/><stop offset="1" stop-color="#d8d8d8"/></linearGradient></defs><rect x="0.5" y="0.5" width="8" height="8" rx="1.2" fill="url(#pg)" stroke="#8e8e8e"/><path d="M2 4.5 H7" stroke="#2a4fa0" stroke-width="1"/><path d="M4.5 2 V7" stroke="#2a4fa0" stroke-width="1"/></svg>
<div class="abs st" style="left:32px;top:481px;width:200px;height:16px;font-size:12px;line-height:16px;white-space:nowrap">市政资料库</div>
<div class="abs hdot" style="left:22px;top:512px;width:8px;height:1px;"></div>
<svg class="abs" style="left:17px;top:507px" width="9" height="9" viewBox="0 0 9 9"><defs><linearGradient id="pg" x1="0" y1="0" x2="1" y2="1"><stop offset="0" stop-color="#fff"/><stop offset="1" stop-color="#d8d8d8"/></linearGradient></defs><rect x="0.5" y="0.5" width="8" height="8" rx="1.2" fill="url(#pg)" stroke="#8e8e8e"/><path d="M2 4.5 H7" stroke="#2a4fa0" stroke-width="1"/><path d="M4.5 2 V7" stroke="#2a4fa0" stroke-width="1"/></svg>
<div class="abs st" style="left:32px;top:501px;width:200px;height:16px;font-size:12px;line-height:16px;white-space:nowrap">水利水电资料库</div>
<svg class="abs" style="left:111px;top:168px" width="190" height="280" viewBox="590 320 190 280"><g fill="#f23a3a"><polygon points="611,335.5 621.5,333 618.5,343.5"/><polygon points="625,368 636,369.2 630.5,376.8"/><polygon points="651,386.5 669.5,388.5 666.5,392 686.5,411.5 662,398 659.5,401"/><polygon points="755.5,487.5 748.5,511 744.5,507 671,583 739.5,502.5 732.5,496.5"/></g></svg>
</div>
</body></html>
